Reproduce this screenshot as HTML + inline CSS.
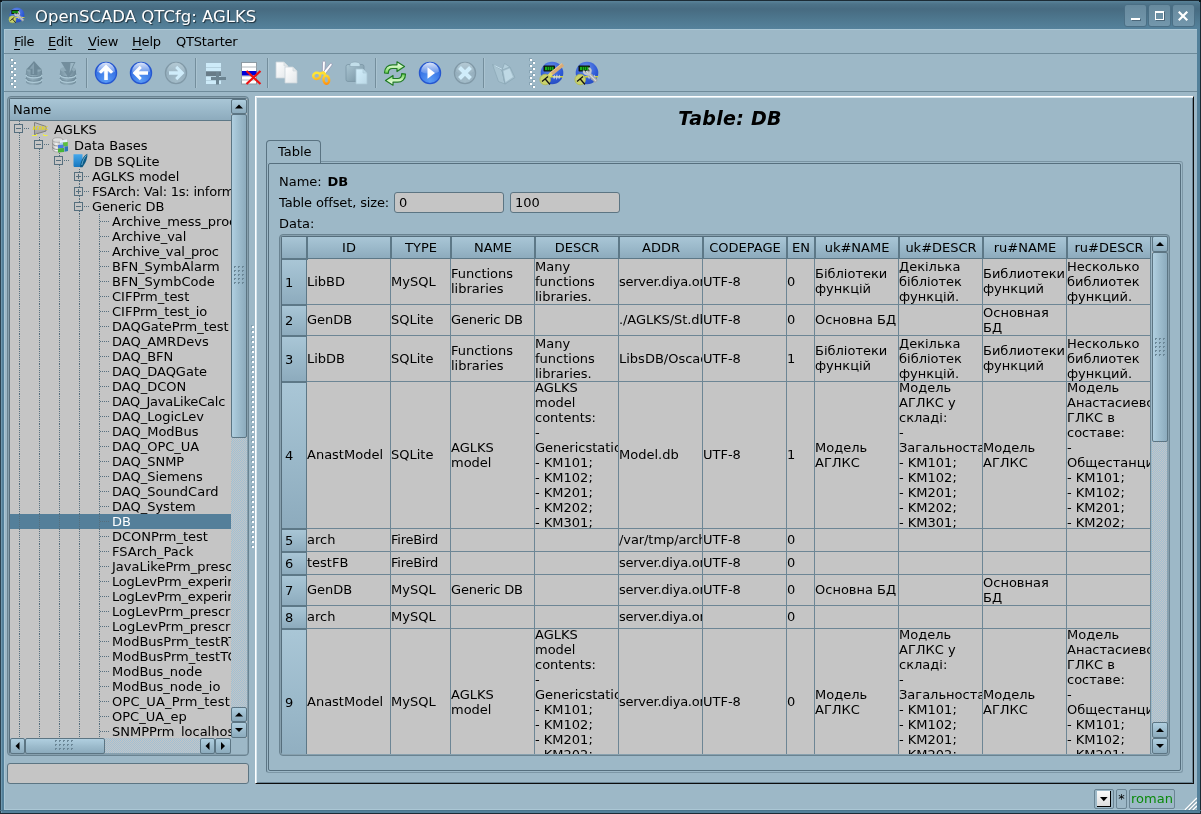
<!DOCTYPE html>
<html lang="en"><head><meta charset="utf-8"><title>OpenSCADA QTCfg: AGLKS</title>
<style>
*{box-sizing:border-box;margin:0;padding:0}
html,body{width:1201px;height:814px;overflow:hidden}
body{position:relative;background:#9db8c7;font-family:"DejaVu Sans","Liberation Sans",sans-serif;font-size:13px;color:#000;line-height:15px}
.a{position:absolute}
.nw{white-space:nowrap}
u{text-decoration:none;border-bottom:1px solid #000}
/* window frame */
#frame{left:0;top:0;width:1201px;height:814px;background:#53809a}
#client{left:4px;top:29px;width:1193px;height:781px;background:#9db8c7}
#title{left:0;top:0;width:1201px;height:29px;background:linear-gradient(#1c2b35 0,#1c2b35 1px,#5a8399 1px,#4d7389 4px,#476b81 9px,#4d768d 18px,#55829c 29px)}
#ttext{left:35px;top:6px;font-size:16.5px;line-height:22px;color:#fff;text-shadow:1px 1px 1px #1d2f3a}
.wb{top:4px;width:23px;height:23px;border:1px solid #4b6f85;border-radius:3px;background:linear-gradient(#678a9e,#7397ac)}
/* generic */
.grad{background:linear-gradient(#adcbdb,#9fbdce 45%,#8eadbf)}
.sunk{background:#c5c5c5}
.tree div.r{position:absolute;left:0;height:15px;white-space:nowrap}
.chk{background:repeating-conic-gradient(#c5c5c5 0% 25%,#9fc0d5 0% 50%) 0 0/2px 2px}
.sb{border:1px solid #5c7583;border-radius:2px;background:linear-gradient(90deg,#b0cfe0,#9dbccd 50%,#8cabbd)}
.sbh{border:1px solid #5c7583;border-radius:2px;background:linear-gradient(#b0cfe0,#9dbccd 50%,#8cabbd)}
.hd{position:absolute;border-right:2px solid #5d7887;border-bottom:2px solid #5d7887;background:linear-gradient(#a9c6d6,#9bb9ca 50%,#8dabbd);text-align:center;white-space:nowrap;overflow:hidden}
.vh{position:absolute;left:0;width:25px;border-right:1px solid #5d7887;border-bottom:2px solid #5d7887;background:linear-gradient(#a9c6d6,#9bb9ca 50%,#8dabbd);padding-left:3px;display:flex;align-items:center}
.cell{position:absolute;overflow:hidden;border-right:1px solid #6d8695;border-bottom:1px solid #6d8695}
.cell span{position:absolute;left:0;display:block;white-space:nowrap;line-height:15px}
</style></head><body>
<div id="root" class="a" style="left:0;top:0;width:1201px;height:814px;overflow:hidden;will-change:transform">

<div id="frame" class="a"></div>
<div id="title" class="a"></div>
<div class="a" style="left:0;top:0;width:1px;height:814px;background:#2c4351"></div>
<div class="a" style="left:1px;top:1px;width:1px;height:812px;background:#6f98af"></div>
<div class="a" style="left:1200px;top:0;width:1px;height:814px;background:#1c2b35"></div>
<div class="a" style="left:0;top:813px;width:1201px;height:1px;background:#1c2b35"></div>
<div id="client" class="a" style="border-left:1px solid #abc7d5;border-bottom:1px solid #abc7d5;border-top:1px solid #abc7d5"></div>
<div class="a" style="left:0;top:810px;width:1201px;height:1px;background:#4a748c"></div>
<div class="a" style="left:0;top:0;width:2px;height:2px;background:#0c1418"></div>
<div class="a" style="left:1199px;top:0;width:2px;height:2px;background:#0c1418"></div>
<div class="a" style="left:9px;top:7px;width:17px;height:17px"><svg width="16" height="16" viewBox="0 0 24 24" style="display:block;overflow:visible"><defs><radialGradient id="g21" cx=".45" cy=".3" r=".8"><stop offset="0" stop-color="#6f93ea"/><stop offset=".6" stop-color="#2f5bd6"/><stop offset="1" stop-color="#2448b8"/></radialGradient></defs><circle cx="12" cy="12" r="11.300" fill="url(#g21)"/><rect x="3.500" y="4.500" width="11.500" height="6" rx=".8" fill="#0c140c"/><rect x="5" y="5.800" width="8.500" height="3.400" fill="#18b018"/><path d="M7.500 5.800V9.200M9.500 5.800V9.200M11.500 5.800V9.200" stroke="#0c3c0c" stroke-width=".7"/><path d="M8 15.800H23" stroke="#e8e428" stroke-width="1.300"/><path d="M13 16l1.500-2.500 1 2.500 1.500-3 1 3 1.500-2.500 1 2.500-1.500 2.500-1-2.500-1.500 3-1-3-1.500 2.500z" fill="#d8dce8" opacity=".8"/><circle cx="5.200" cy="18.500" r="5.300" fill="#c9d26c"/><circle cx="5.200" cy="18.500" r="5.300" fill="none" stroke="#aeb850" stroke-width=".8"/><path d="M2 20.500L8 15.500M5 17.800L10 23.500" stroke="#141414" stroke-width="1.300"/><path d="M11.500 10.500L21.500 20.500" stroke="#a2a6aa" stroke-width="4"/><path d="M11 10L21 20" stroke="#d4d8dc" stroke-width="1.200"/><path d="M9 9.500A3.300 3.300 0 1 0 13.500 7" fill="none" stroke="#c4c8cc" stroke-width="2.200"/></svg></div>
<div id="ttext" class="a nw">OpenSCADA QTCfg: AGLKS</div>
<div class="a wb" style="left:1124px"><div class="a" style="left:6px;top:13px;width:9px;height:2px;background:#fff;box-shadow:1px 1px 0 rgba(40,60,75,.5)"></div></div><div class="a wb" style="left:1148px"><div class="a" style="left:6px;top:6px;width:9px;height:9px;border:1px solid #fff;border-top-width:2px;box-shadow:1px 1px 0 rgba(40,60,75,.5)"></div></div><div class="a wb" style="left:1172px"><svg class="a" style="left:5px;top:6px" width="11" height="11"><path d="M1.5 1.5L8.500 8.500M8.500 1.500L1.500 8.500" stroke="#fff" stroke-width="2.2" stroke-linecap="square"/></svg></div>
<div class="a" style="left:4px;top:53px;width:1193px;height:1px;background:#6f8b9a"></div>
<div class="a nw" style="left:14px;top:34px;line-height:16px;letter-spacing:-0.4px"><u>F</u>ile</div>
<div class="a nw" style="left:48px;top:34px;line-height:16px;letter-spacing:-0.2px"><u>E</u>dit</div>
<div class="a nw" style="left:88px;top:34px;line-height:16px;letter-spacing:-0.2px"><u>V</u>iew</div>
<div class="a nw" style="left:132px;top:34px;line-height:16px;letter-spacing:-0.2px"><u>H</u>elp</div>
<div class="a nw" style="left:176px;top:34px;line-height:16px;letter-spacing:-0.2px">QTStarter</div>
<div class="a" style="left:4px;top:91px;width:1193px;height:1px;background:#6f8b9a"></div>
<svg class="a" style="left:10px;top:58px" width="6" height="30" shape-rendering="crispEdges"><rect x="0" y="0" width="3" height="3" fill="#86a3b3"/><rect x="1" y="1" width="2" height="2" fill="#fff"/><rect x="3" y="3" width="3" height="3" fill="#86a3b3"/><rect x="4" y="4" width="2" height="2" fill="#fff"/><rect x="0" y="6" width="3" height="3" fill="#86a3b3"/><rect x="1" y="7" width="2" height="2" fill="#fff"/><rect x="3" y="9" width="3" height="3" fill="#86a3b3"/><rect x="4" y="10" width="2" height="2" fill="#fff"/><rect x="0" y="12" width="3" height="3" fill="#86a3b3"/><rect x="1" y="13" width="2" height="2" fill="#fff"/><rect x="3" y="15" width="3" height="3" fill="#86a3b3"/><rect x="4" y="16" width="2" height="2" fill="#fff"/><rect x="0" y="18" width="3" height="3" fill="#86a3b3"/><rect x="1" y="19" width="2" height="2" fill="#fff"/><rect x="3" y="21" width="3" height="3" fill="#86a3b3"/><rect x="4" y="22" width="2" height="2" fill="#fff"/><rect x="0" y="24" width="3" height="3" fill="#86a3b3"/><rect x="1" y="25" width="2" height="2" fill="#fff"/><rect x="3" y="27" width="3" height="3" fill="#86a3b3"/><rect x="4" y="28" width="2" height="2" fill="#fff"/></svg><svg class="a" style="left:529px;top:58px" width="6" height="30" shape-rendering="crispEdges"><rect x="0" y="0" width="3" height="3" fill="#86a3b3"/><rect x="1" y="1" width="2" height="2" fill="#fff"/><rect x="3" y="3" width="3" height="3" fill="#86a3b3"/><rect x="4" y="4" width="2" height="2" fill="#fff"/><rect x="0" y="6" width="3" height="3" fill="#86a3b3"/><rect x="1" y="7" width="2" height="2" fill="#fff"/><rect x="3" y="9" width="3" height="3" fill="#86a3b3"/><rect x="4" y="10" width="2" height="2" fill="#fff"/><rect x="0" y="12" width="3" height="3" fill="#86a3b3"/><rect x="1" y="13" width="2" height="2" fill="#fff"/><rect x="3" y="15" width="3" height="3" fill="#86a3b3"/><rect x="4" y="16" width="2" height="2" fill="#fff"/><rect x="0" y="18" width="3" height="3" fill="#86a3b3"/><rect x="1" y="19" width="2" height="2" fill="#fff"/><rect x="3" y="21" width="3" height="3" fill="#86a3b3"/><rect x="4" y="22" width="2" height="2" fill="#fff"/><rect x="0" y="24" width="3" height="3" fill="#86a3b3"/><rect x="1" y="25" width="2" height="2" fill="#fff"/><rect x="3" y="27" width="3" height="3" fill="#86a3b3"/><rect x="4" y="28" width="2" height="2" fill="#fff"/></svg><div class="a" style="left:86px;top:58px;width:2px;height:30px;background:linear-gradient(90deg,#748e9c 50%,#aac3d0 50%)"></div><div class="a" style="left:195px;top:58px;width:2px;height:30px;background:linear-gradient(90deg,#748e9c 50%,#aac3d0 50%)"></div><div class="a" style="left:267px;top:58px;width:2px;height:30px;background:linear-gradient(90deg,#748e9c 50%,#aac3d0 50%)"></div><div class="a" style="left:375px;top:58px;width:2px;height:30px;background:linear-gradient(90deg,#748e9c 50%,#aac3d0 50%)"></div><div class="a" style="left:483px;top:58px;width:2px;height:30px;background:linear-gradient(90deg,#748e9c 50%,#aac3d0 50%)"></div><div class="a" style="left:22px;top:61px;width:24px;height:24px"><svg width="24" height="24" viewBox="0 0 24 24" style="display:block;overflow:visible"><defs><linearGradient id="g11" x1="0" y1="0" x2="1" y2="0"><stop offset="0" stop-color="#7893a2"/><stop offset=".4" stop-color="#91acba"/><stop offset="1" stop-color="#6f8a99"/></linearGradient></defs><path d="M4 8.500V20.800C4 22.600 7.500 24 12 24S20 22.600 20 20.800V8.500Z" fill="url(#g11)"/><ellipse cx="12" cy="8.500" rx="8" ry="2.800" fill="#8faab8"/><path d="M4 12.800C4 14.600 7.500 15.800 12 15.800S20 14.600 20 12.800" fill="none" stroke="#6f8a99" stroke-width="1"/><path d="M4 17.300C4 19.100 7.500 20.300 12 20.300S20 19.100 20 17.300" fill="none" stroke="#6f8a99" stroke-width="1"/><path d="M4 13.800C4 15.600 7.500 16.800 12 16.800S20 15.600 20 13.800" fill="none" stroke="#aecad7" stroke-width="1.300"/><path d="M4 18.300C4 20.100 7.500 21.300 12 21.300S20 20.100 20 18.300" fill="none" stroke="#aecad7" stroke-width="1.300"/><path d="M12 0L4.500 8.500H8.500V14H15.500V8.500H19.500Z" fill="#6e8998"/><path d="M12 2L7.500 7.800H10.500V13H12Z" fill="#86a1b0"/></svg></div><div class="a" style="left:56px;top:61px;width:24px;height:24px"><svg width="24" height="24" viewBox="0 0 24 24" style="display:block;overflow:visible"><defs><linearGradient id="g12" x1="0" y1="0" x2="1" y2="0"><stop offset="0" stop-color="#7893a2"/><stop offset=".4" stop-color="#91acba"/><stop offset="1" stop-color="#6f8a99"/></linearGradient></defs><path d="M4 8.500V20.800C4 22.600 7.500 24 12 24S20 22.600 20 20.800V8.500Z" fill="url(#g12)"/><ellipse cx="12" cy="8.500" rx="8" ry="2.800" fill="#8faab8"/><path d="M4 12.800C4 14.600 7.500 15.800 12 15.800S20 14.600 20 12.800" fill="none" stroke="#6f8a99" stroke-width="1"/><path d="M4 17.300C4 19.100 7.500 20.300 12 20.300S20 19.100 20 17.300" fill="none" stroke="#6f8a99" stroke-width="1"/><path d="M4 13.800C4 15.600 7.500 16.800 12 16.800S20 15.600 20 13.800" fill="none" stroke="#aecad7" stroke-width="1.300"/><path d="M4 18.300C4 20.100 7.500 21.300 12 21.300S20 20.100 20 18.300" fill="none" stroke="#aecad7" stroke-width="1.300"/><path d="M5 1H19.500L15.500 9L17.500 10L12.500 16.500L8 10H10.500Z" fill="#738e9d"/><path d="M14.500 2H18L13.500 12Z" fill="#9cb7c5"/></svg></div><div class="a" style="left:94px;top:61px;width:24px;height:24px"><svg width="24" height="24" viewBox="0 0 24 24" style="display:block;overflow:visible"><defs><radialGradient id="g1" cx=".5" cy=".85" r=".8"><stop offset="0" stop-color="#5a9cf6"/><stop offset="1" stop-color="#2a63dd"/></radialGradient><linearGradient id="g2" x1="0" y1="0" x2="0" y2="1"><stop offset="0" stop-color="#ffffff" stop-opacity="0.85"/><stop offset="1" stop-color="#ffffff" stop-opacity="0.15"/></linearGradient></defs><circle cx="12" cy="12" r="10.6" fill="url(#g1)" stroke="#2556cf" stroke-width="1.2"/><path d="M3 10.500A9 9 0 0 1 21 10.500C18 13.500 6 13.500 3 10.500Z" fill="url(#g2)"/><path d="M12 3.500L4.800 10.800L7 12.800L10.200 9.800V19H13.800V9.800L17 12.800L19.200 10.800Z" fill="#fff"/></svg></div><div class="a" style="left:129px;top:61px;width:24px;height:24px"><svg width="24" height="24" viewBox="0 0 24 24" style="display:block;overflow:visible"><defs><radialGradient id="g3" cx=".5" cy=".85" r=".8"><stop offset="0" stop-color="#5a9cf6"/><stop offset="1" stop-color="#2a63dd"/></radialGradient><linearGradient id="g4" x1="0" y1="0" x2="0" y2="1"><stop offset="0" stop-color="#ffffff" stop-opacity="0.85"/><stop offset="1" stop-color="#ffffff" stop-opacity="0.15"/></linearGradient></defs><circle cx="12" cy="12" r="10.6" fill="url(#g3)" stroke="#2556cf" stroke-width="1.2"/><path d="M3 10.500A9 9 0 0 1 21 10.500C18 13.500 6 13.500 3 10.500Z" fill="url(#g4)"/><path d="M12 3.500L4.800 10.800L7 12.800L10.200 9.800V19H13.800V9.800L17 12.800L19.200 10.800Z" fill="#fff" transform="rotate(-90 12 12)"/></svg></div><div class="a" style="left:164px;top:61px;width:24px;height:24px"><svg width="24" height="24" viewBox="0 0 24 24" style="display:block;overflow:visible"><defs><radialGradient id="g5" cx=".5" cy=".85" r=".8"><stop offset="0" stop-color="#a3bcc9"/><stop offset="1" stop-color="#90aab9"/></radialGradient><linearGradient id="g6" x1="0" y1="0" x2="0" y2="1"><stop offset="0" stop-color="#d4e6ee" stop-opacity="0.55"/><stop offset="1" stop-color="#d4e6ee" stop-opacity="0.05"/></linearGradient></defs><circle cx="12" cy="12" r="10.6" fill="url(#g5)" stroke="#8199a7" stroke-width="1.2"/><path d="M3 10.500A9 9 0 0 1 21 10.500C18 13.500 6 13.500 3 10.500Z" fill="url(#g6)"/><path d="M12 3.500L4.800 10.800L7 12.800L10.200 9.800V19H13.800V9.800L17 12.800L19.200 10.800Z" fill="#cfecfa" transform="rotate(90 12 12)"/></svg></div><div class="a" style="left:202px;top:61px;width:24px;height:24px"><svg width="24" height="24" viewBox="0 0 24 24" style="display:block;overflow:visible"><rect x="4" y="2" width="15" height="4" fill="#cdebf9"/><rect x="4" y="6.500" width="15" height="3.500" fill="#cdebf9"/><rect x="4" y="10.500" width="15" height="4.500" fill="#687c88"/><rect x="4" y="15.500" width="15" height="3.500" fill="#cdebf9"/><rect x="4" y="19.500" width="15" height="3.500" fill="#cdebf9"/><path d="M15.500 11V23.500M9 17.500H24" stroke="#6c8491" stroke-width="3"/></svg></div><div class="a" style="left:238px;top:61px;width:24px;height:24px"><svg width="24" height="24" viewBox="0 0 24 24" style="display:block;overflow:visible"><rect x="3.500" y="1.500" width="15" height="21.500" fill="#fff" stroke="#8c9aa3" stroke-width="1"/><path d="M3.500 6H18.500M3.500 15H18.500M3.500 19H18.500" stroke="#b0b8bd" stroke-width="1"/><rect x="4" y="10" width="14.500" height="4.500" fill="#0000d6"/><path d="M8.500 10L22.500 23M22.500 10L8.500 23" stroke="#ee1010" stroke-width="2.200"/></svg></div><div class="a" style="left:275px;top:61px;width:24px;height:24px"><svg width="24" height="24" viewBox="0 0 24 24" style="display:block;overflow:visible"><defs><linearGradient id="g13" x1="0" y1="0" x2="1" y2="1"><stop offset="0" stop-color="#ffffff"/><stop offset="1" stop-color="#e3e7ea"/></linearGradient></defs><path d="M1 1H9L13 5V17H1Z" fill="url(#g13)" stroke="#c9d3d9" stroke-width=".8"/><path d="M9 1V5H13Z" fill="#e3e7ea" stroke="#c9d3d9" stroke-width=".6"/><defs><linearGradient id="g14" x1="0" y1="0" x2="1" y2="1"><stop offset="0" stop-color="#ffffff"/><stop offset="1" stop-color="#e3e7ea"/></linearGradient></defs><path d="M10 6H18L22 10V22H10Z" fill="url(#g14)" stroke="#c9d3d9" stroke-width=".8"/><path d="M18 6V10H22Z" fill="#e3e7ea" stroke="#c9d3d9" stroke-width=".6"/></svg></div><div class="a" style="left:310px;top:61px;width:24px;height:24px"><svg width="24" height="24" viewBox="0 0 24 24" style="display:block;overflow:visible"><defs><linearGradient id="cutg" x1="0" y1="11" x2="0" y2="23.500" gradientUnits="userSpaceOnUse"><stop offset=".15" stop-color="#ffe636"/><stop offset="1" stop-color="#ff9010"/></linearGradient></defs><path d="M14 0C15 0 15.500 .8 15.400 2L14.700 11.500L12.300 12.500L12.500 2C12.500 .8 13 0 14 0Z" fill="#fbfbfd" stroke="#8e8eaa" stroke-width=".7"/><path d="M21.700 2.600C22.300 3.200 22.100 4 21.500 4.800L15.200 13.200L13 11.300L19.800 3C20.400 2.200 21.100 2 21.700 2.600Z" fill="#fbfbfd" stroke="#8e8eaa" stroke-width=".7"/><path d="M10 12.500L13.600 11.600L15.300 13.800" stroke="#ffe032" stroke-width="2.800" fill="none" stroke-linejoin="round"/><ellipse cx="6.700" cy="14.800" rx="3.500" ry="3.100" transform="rotate(-12 6.700 14.800)" fill="none" stroke="url(#cutg)" stroke-width="2.500"/><ellipse cx="16.300" cy="18.700" rx="2.800" ry="4" transform="rotate(-8 16.300 18.700)" fill="none" stroke="url(#cutg)" stroke-width="2.500"/></svg></div><div class="a" style="left:345px;top:61px;width:24px;height:24px"><svg width="24" height="24" viewBox="0 0 24 24" style="display:block;overflow:visible"><defs><linearGradient id="g15" x1="0" y1="0" x2="1" y2="1"><stop offset="0" stop-color="#aac6d3"/><stop offset="1" stop-color="#7590a0"/></linearGradient></defs><rect x="1" y="3.500" width="18" height="17" rx="2" fill="url(#g15)" stroke="#7a95a5" stroke-width=".8"/><path d="M5 5.500V3.500C5 2 7 1 10 1S15 2 15 3.500V5.500Z" fill="#c2deea" stroke="#8aa5b4" stroke-width=".6"/><defs><linearGradient id="g16" x1="0" y1="0" x2="1" y2="1"><stop offset="0" stop-color="#d3effc"/><stop offset="1" stop-color="#bcd9e7"/></linearGradient></defs><path d="M11 8H18L22 12V23H11Z" fill="url(#g16)" stroke="#a9c6d4" stroke-width=".8"/><path d="M18 8V12H22Z" fill="#bcd9e7" stroke="#a9c6d4" stroke-width=".6"/></svg></div><div class="a" style="left:383px;top:61px;width:24px;height:24px"><svg width="24" height="24" viewBox="0 0 24 24" style="display:block;overflow:visible"><defs><linearGradient id="g17" x1="0" y1="0" x2="0" y2="1"><stop offset="0" stop-color="#ffffff"/><stop offset=".5" stop-color="#c2f2b0"/><stop offset="1" stop-color="#62cc48"/></linearGradient></defs><path d="M1.500 12C1.500 6.500 5 3.800 9.500 3.800H14V.8L21.500 5.500L14 10.500V7.500H9.500C7 7.500 5.300 9 5.300 12.300Z" fill="url(#g17)" stroke="#1f7a24" stroke-width="1.200" stroke-linejoin="round"/><defs><linearGradient id="g18" x1="0" y1="0" x2="0" y2="1"><stop offset="0" stop-color="#ffffff"/><stop offset=".5" stop-color="#c2f2b0"/><stop offset="1" stop-color="#62cc48"/></linearGradient></defs><path transform="rotate(180 12 12.500)" d="M1.500 12C1.500 6.500 5 3.800 9.500 3.800H14V.8L21.500 5.500L14 10.500V7.500H9.500C7 7.500 5.300 9 5.300 12.300Z" fill="url(#g18)" stroke="#1f7a24" stroke-width="1.200" stroke-linejoin="round"/></svg></div><div class="a" style="left:418px;top:61px;width:24px;height:24px"><svg width="24" height="24" viewBox="0 0 24 24" style="display:block;overflow:visible"><defs><radialGradient id="g7" cx=".5" cy=".85" r=".8"><stop offset="0" stop-color="#5a9cf6"/><stop offset="1" stop-color="#2a63dd"/></radialGradient><linearGradient id="g8" x1="0" y1="0" x2="0" y2="1"><stop offset="0" stop-color="#ffffff" stop-opacity="0.85"/><stop offset="1" stop-color="#ffffff" stop-opacity="0.15"/></linearGradient></defs><circle cx="12" cy="12" r="10.6" fill="url(#g7)" stroke="#2556cf" stroke-width="1.2"/><path d="M3 10.500A9 9 0 0 1 21 10.500C18 13.500 6 13.500 3 10.500Z" fill="url(#g8)"/><path d="M9.500 6.200L17 12L9.500 17.800Z" fill="#fff"/></svg></div><div class="a" style="left:453px;top:61px;width:24px;height:24px"><svg width="24" height="24" viewBox="0 0 24 24" style="display:block;overflow:visible"><defs><radialGradient id="g9" cx=".5" cy=".85" r=".8"><stop offset="0" stop-color="#a3bcc9"/><stop offset="1" stop-color="#90aab9"/></radialGradient><linearGradient id="g10" x1="0" y1="0" x2="0" y2="1"><stop offset="0" stop-color="#d4e6ee" stop-opacity="0.55"/><stop offset="1" stop-color="#d4e6ee" stop-opacity="0.05"/></linearGradient></defs><circle cx="12" cy="12" r="10.6" fill="url(#g9)" stroke="#8199a7" stroke-width="1.2"/><path d="M3 10.500A9 9 0 0 1 21 10.500C18 13.500 6 13.500 3 10.500Z" fill="url(#g10)"/><path d="M6.500 6.500L17.500 17.500M17.500 6.500L6.500 17.500" stroke="#cfecfa" stroke-width="4"/></svg></div><div class="a" style="left:491px;top:61px;width:24px;height:24px"><svg width="24" height="24" viewBox="0 0 24 24" style="display:block;overflow:visible"><path d="M1.500 3.500L11 9L14 23L7.500 20.500Z" fill="#a9c4d1" stroke="#8aa6b5" stroke-width=".7"/><path d="M3.500 4.500L11.500 8.500L14 22" fill="none" stroke="#c2dce8" stroke-width="1"/><path d="M11 9L13.500 2.500L19 6L22.500 17L14 23Z" fill="#b4cfdc" stroke="#8aa6b5" stroke-width=".7"/><path d="M11 9L19 6L24 16.500L14 23Z" fill="#a3becc" stroke="#8aa6b5" stroke-width=".7"/><path d="M12.500 10L18.500 7.500L22 16L14.500 21Z" fill="#bfd9e5"/></svg></div><div class="a" style="left:540px;top:61px;width:24px;height:24px"><svg width="24" height="24" viewBox="0 0 24 24" style="display:block;overflow:visible"><defs><radialGradient id="g19" cx=".45" cy=".3" r=".8"><stop offset="0" stop-color="#6f93ea"/><stop offset=".6" stop-color="#2f5bd6"/><stop offset="1" stop-color="#2448b8"/></radialGradient></defs><circle cx="12" cy="12" r="11.300" fill="url(#g19)"/><rect x="3.500" y="4.500" width="11.500" height="6" rx=".8" fill="#0c140c"/><rect x="5" y="5.800" width="8.500" height="3.400" fill="#18b018"/><path d="M7.500 5.800V9.200M9.500 5.800V9.200M11.500 5.800V9.200" stroke="#0c3c0c" stroke-width=".7"/><path d="M8 15.800H23" stroke="#e8e428" stroke-width="1.300"/><path d="M13 16l1.500-2.500 1 2.500 1.500-3 1 3 1.500-2.500 1 2.500-1.500 2.500-1-2.500-1.500 3-1-3-1.500 2.500z" fill="#d8dce8" opacity=".8"/><circle cx="5.200" cy="18.500" r="5.300" fill="#c9d26c"/><circle cx="5.200" cy="18.500" r="5.300" fill="none" stroke="#aeb850" stroke-width=".8"/><path d="M2 20.500L8 15.500M5 17.800L10 23.500" stroke="#141414" stroke-width="1.300"/><path d="M23 3.500L10.500 13.500" stroke="#d9ab77" stroke-width="3.600"/><path d="M22 2.500L10 12" stroke="#e9c79c" stroke-width="1"/><path d="M11.500 12.500L9 15" stroke="#e6dc6a" stroke-width="3.600"/></svg></div><div class="a" style="left:575px;top:61px;width:24px;height:24px"><svg width="24" height="24" viewBox="0 0 24 24" style="display:block;overflow:visible"><defs><radialGradient id="g20" cx=".45" cy=".3" r=".8"><stop offset="0" stop-color="#6f93ea"/><stop offset=".6" stop-color="#2f5bd6"/><stop offset="1" stop-color="#2448b8"/></radialGradient></defs><circle cx="12" cy="12" r="11.300" fill="url(#g20)"/><rect x="3.500" y="4.500" width="11.500" height="6" rx=".8" fill="#0c140c"/><rect x="5" y="5.800" width="8.500" height="3.400" fill="#18b018"/><path d="M7.500 5.800V9.200M9.500 5.800V9.200M11.500 5.800V9.200" stroke="#0c3c0c" stroke-width=".7"/><path d="M8 15.800H23" stroke="#e8e428" stroke-width="1.300"/><path d="M13 16l1.500-2.500 1 2.500 1.500-3 1 3 1.500-2.500 1 2.500-1.500 2.500-1-2.500-1.500 3-1-3-1.500 2.500z" fill="#d8dce8" opacity=".8"/><circle cx="5.200" cy="18.500" r="5.300" fill="#c9d26c"/><circle cx="5.200" cy="18.500" r="5.300" fill="none" stroke="#aeb850" stroke-width=".8"/><path d="M2 20.500L8 15.500M5 17.800L10 23.500" stroke="#141414" stroke-width="1.300"/><path d="M11.500 10.500L21.500 20.500" stroke="#a2a6aa" stroke-width="4"/><path d="M11 10L21 20" stroke="#d4d8dc" stroke-width="1.200"/><path d="M9 9.500A3.300 3.300 0 1 0 13.500 7" fill="none" stroke="#c4c8cc" stroke-width="2.200"/></svg></div>
<div class="a" style="left:7px;top:96px;width:242px;height:660px;border:1px solid #6a8391;border-radius:4px;background:#87a0ae"></div><div class="a" style="left:9px;top:98px;width:238px;height:656px;border:1px solid #566e7c;border-right-color:#87a0ae;border-bottom-color:#87a0ae;border-radius:2px;background:#9db8c7"></div><div class="a" style="left:10px;top:99px;width:221px;height:22px;background:linear-gradient(#a9c6d6,#9bb9ca 50%,#8dabbd);border-bottom:1px solid #5d7887;padding-left:3px;line-height:21px">Name</div><div class="a sunk tree" style="left:10px;top:121px;width:221px;height:617px;overflow:hidden"><div class="a" style="left:22px;top:0px;width:16px;height:16px"><svg width="16" height="16" viewBox="0 0 16 16" style="display:block;overflow:visible"><defs><linearGradient id="tga" x1="0" y1="0" x2="0" y2="1"><stop offset="0" stop-color="#c4c4c4"/><stop offset="1" stop-color="#a2a2a2"/></linearGradient></defs><path d="M2.500 1.500L14 5.500V10L2.500 13.500Z" fill="url(#tga)" stroke="#7e7e7e" stroke-width="1"/><text x="0.500" y="9.300" font-family="DejaVu Sans,Liberation Sans,sans-serif" font-size="5.200" font-weight="bold" fill="#e6d820" textLength="15.500" lengthAdjust="spacingAndGlyphs">АГЛКС</text><path d="M0 14.500H4.500V13M11.500 13V14.500H15.500" stroke="#eeee44" stroke-width="1" fill="none"/></svg></div><div class="r" style="left:44px;top:1px;line-height:16px;height:16px;">AGLKS</div><div class="a" style="left:42px;top:16px;width:16px;height:16px"><svg width="16" height="16" viewBox="0 0 16 16" style="display:block;overflow:visible"><defs><linearGradient id="tgb" x1="0" y1="0" x2="1" y2="0"><stop offset="0" stop-color="#b8b8b8"/><stop offset=".35" stop-color="#f2f2f2"/><stop offset="1" stop-color="#9c9c9c"/></linearGradient></defs><path d="M.5 3V12.500C.5 13.800 2.800 15 5.800 15S11 13.800 11 12.500V3Z" fill="url(#tgb)" stroke="#8e8e8e" stroke-width=".6"/><ellipse cx="5.800" cy="3" rx="5.200" ry="2.300" fill="#dcdcdc" stroke="#8e8e8e" stroke-width=".6"/><path d="M.5 6.500C.5 7.800 2.800 9 5.800 9M.5 10C.5 11.300 2.800 12.500 5.800 12.500" fill="none" stroke="#7c7c7c" stroke-width=".8"/><path d="M8 3.500L15 2.500V5L8 6Z" fill="#e8f2fa"/><path d="M11 5.500L15.800 5V9L11 9.500Z" fill="#5cc040"/><path d="M6 8L11.500 7.500V11L6 11.500Z" fill="#4a7ce0"/><path d="M6 11.500L12 11V15L6 15.500Z" fill="#48b438"/><path d="M12.500 9.500L16 9.200V14L12.500 14.800Z" fill="#2c78b8"/><path d="M8 6L11 5.700V7.500L8 7.800Z" fill="#a8d4f4"/></svg></div><div class="r" style="left:64px;top:17px;line-height:16px;height:16px;">Data Bases</div><div class="a" style="left:62px;top:32px;width:16px;height:16px"><svg width="16" height="16" viewBox="0 0 16 16" style="display:block;overflow:visible"><defs><linearGradient id="tgc" x1="0" y1="0" x2="0" y2="1"><stop offset="0" stop-color="#44a8ec"/><stop offset="1" stop-color="#1676be"/></linearGradient></defs><path d="M1.500 1.300H10.500V14H3C2 14 1.500 13.500 1.500 12.500Z" fill="url(#tgc)"/><path d="M8 14.200C8.500 8.500 11 3 15.300 .8C15.800 5 13.500 10.500 10.300 14.200Z" fill="#0d5a84"/><path d="M9.800 12C10.500 8 12.300 4.500 14.300 2.500" stroke="#7cc0e4" stroke-width=".8" fill="none"/></svg></div><div class="r" style="left:84px;top:33px;line-height:16px;height:16px;">DB SQLite</div><div class="r" style="left:82px;top:48px;line-height:15px;height:15px;">AGLKS model</div><div class="r" style="left:82px;top:63px;line-height:15px;height:15px;letter-spacing:-0.22px;">FSArch: Val: 1s: information</div><div class="r" style="left:82px;top:78px;line-height:15px;height:15px;letter-spacing:-0.13px;">Generic DB</div><div class="r" style="left:102px;top:93px;line-height:15px;height:15px;">Archive_mess_proc</div><div class="r" style="left:102px;top:108px;line-height:15px;height:15px;">Archive_val</div><div class="r" style="left:102px;top:123px;line-height:15px;height:15px;letter-spacing:-0.16px;">Archive_val_proc</div><div class="r" style="left:102px;top:138px;line-height:15px;height:15px;">BFN_SymbAlarm</div><div class="r" style="left:102px;top:153px;line-height:15px;height:15px;">BFN_SymbCode</div><div class="r" style="left:102px;top:168px;line-height:15px;height:15px;">CIFPrm_test</div><div class="r" style="left:102px;top:183px;line-height:15px;height:15px;">CIFPrm_test_io</div><div class="r" style="left:102px;top:198px;line-height:15px;height:15px;">DAQGatePrm_test</div><div class="r" style="left:102px;top:213px;line-height:15px;height:15px;">DAQ_AMRDevs</div><div class="r" style="left:102px;top:228px;line-height:15px;height:15px;">DAQ_BFN</div><div class="r" style="left:102px;top:243px;line-height:15px;height:15px;">DAQ_DAQGate</div><div class="r" style="left:102px;top:258px;line-height:15px;height:15px;">DAQ_DCON</div><div class="r" style="left:102px;top:273px;line-height:15px;height:15px;letter-spacing:-0.2px;">DAQ_JavaLikeCalc</div><div class="r" style="left:102px;top:288px;line-height:15px;height:15px;">DAQ_LogicLev</div><div class="r" style="left:102px;top:303px;line-height:15px;height:15px;">DAQ_ModBus</div><div class="r" style="left:102px;top:318px;line-height:15px;height:15px;">DAQ_OPC_UA</div><div class="r" style="left:102px;top:333px;line-height:15px;height:15px;">DAQ_SNMP</div><div class="r" style="left:102px;top:348px;line-height:15px;height:15px;">DAQ_Siemens</div><div class="r" style="left:102px;top:363px;line-height:15px;height:15px;">DAQ_SoundCard</div><div class="r" style="left:102px;top:378px;line-height:15px;height:15px;">DAQ_System</div><div class="a" style="left:0;top:393px;width:221px;height:15px;background:#547f9a"></div><div class="r" style="left:102px;top:393px;line-height:15px;height:15px;color:#fff;">DB</div><div class="r" style="left:102px;top:408px;line-height:15px;height:15px;">DCONPrm_test</div><div class="r" style="left:102px;top:423px;line-height:15px;height:15px;">FSArch_Pack</div><div class="r" style="left:102px;top:438px;line-height:15px;height:15px;">JavaLikePrm_prescription</div><div class="r" style="left:102px;top:453px;line-height:15px;height:15px;letter-spacing:-0.2px;">LogLevPrm_experiment</div><div class="r" style="left:102px;top:468px;line-height:15px;height:15px;letter-spacing:-0.2px;">LogLevPrm_experiment_io</div><div class="r" style="left:102px;top:483px;line-height:15px;height:15px;">LogLevPrm_prescription</div><div class="r" style="left:102px;top:498px;line-height:15px;height:15px;">LogLevPrm_prescription_io</div><div class="r" style="left:102px;top:513px;line-height:15px;height:15px;">ModBusPrm_testRTU</div><div class="r" style="left:102px;top:528px;line-height:15px;height:15px;">ModBusPrm_testTCP</div><div class="r" style="left:102px;top:543px;line-height:15px;height:15px;">ModBus_node</div><div class="r" style="left:102px;top:558px;line-height:15px;height:15px;">ModBus_node_io</div><div class="r" style="left:102px;top:573px;line-height:15px;height:15px;letter-spacing:0.17px;">OPC_UA_Prm_test</div><div class="r" style="left:102px;top:588px;line-height:15px;height:15px;">OPC_UA_ep</div><div class="r" style="left:102px;top:603px;line-height:15px;height:15px;">SNMPPrm_localhost</div><svg class="a" style="left:0;top:0" width="221" height="617" shape-rendering="crispEdges"><line x1="9.5" y1="0" x2="9.5" y2="3" stroke="#566f7e" stroke-width="1" stroke-dasharray="1 1"/><line x1="9.5" y1="12" x2="9.5" y2="16" stroke="#566f7e" stroke-width="1" stroke-dasharray="1 1"/><rect x="4.5" y="3.5" width="8" height="8" fill="none" stroke="#566f7e"/><line x1="6" y1="7.5" x2="11" y2="7.5" stroke="#566f7e"/><line x1="14" y1="7.5" x2="19" y2="7.5" stroke="#566f7e" stroke-width="1" stroke-dasharray="1 1"/><line x1="9.5" y1="16" x2="9.5" y2="32" stroke="#566f7e" stroke-width="1" stroke-dasharray="1 1"/><line x1="29.5" y1="16" x2="29.5" y2="19" stroke="#566f7e" stroke-width="1" stroke-dasharray="1 1"/><line x1="29.5" y1="28" x2="29.5" y2="32" stroke="#566f7e" stroke-width="1" stroke-dasharray="1 1"/><rect x="24.5" y="19.5" width="8" height="8" fill="none" stroke="#566f7e"/><line x1="26" y1="23.5" x2="31" y2="23.5" stroke="#566f7e"/><line x1="34" y1="23.5" x2="39" y2="23.5" stroke="#566f7e" stroke-width="1" stroke-dasharray="1 1"/><line x1="9.5" y1="32" x2="9.5" y2="48" stroke="#566f7e" stroke-width="1" stroke-dasharray="1 1"/><line x1="29.5" y1="32" x2="29.5" y2="48" stroke="#566f7e" stroke-width="1" stroke-dasharray="1 1"/><line x1="49.5" y1="32" x2="49.5" y2="35" stroke="#566f7e" stroke-width="1" stroke-dasharray="1 1"/><line x1="49.5" y1="44" x2="49.5" y2="48" stroke="#566f7e" stroke-width="1" stroke-dasharray="1 1"/><rect x="44.5" y="35.5" width="8" height="8" fill="none" stroke="#566f7e"/><line x1="46" y1="39.5" x2="51" y2="39.5" stroke="#566f7e"/><line x1="54" y1="39.5" x2="59" y2="39.5" stroke="#566f7e" stroke-width="1" stroke-dasharray="1 1"/><line x1="9.5" y1="48" x2="9.5" y2="63" stroke="#566f7e" stroke-width="1" stroke-dasharray="1 1"/><line x1="29.5" y1="48" x2="29.5" y2="63" stroke="#566f7e" stroke-width="1" stroke-dasharray="1 1"/><line x1="49.5" y1="48" x2="49.5" y2="63" stroke="#566f7e" stroke-width="1" stroke-dasharray="1 1"/><line x1="69.5" y1="48" x2="69.5" y2="51" stroke="#566f7e" stroke-width="1" stroke-dasharray="1 1"/><line x1="69.5" y1="60" x2="69.5" y2="63" stroke="#566f7e" stroke-width="1" stroke-dasharray="1 1"/><rect x="64.5" y="51.5" width="8" height="8" fill="none" stroke="#566f7e"/><line x1="66" y1="55.5" x2="71" y2="55.5" stroke="#566f7e"/><line x1="68.5" y1="53" x2="68.5" y2="58" stroke="#566f7e"/><line x1="74" y1="55.5" x2="79" y2="55.5" stroke="#566f7e" stroke-width="1" stroke-dasharray="1 1"/><line x1="9.5" y1="63" x2="9.5" y2="78" stroke="#566f7e" stroke-width="1" stroke-dasharray="1 1"/><line x1="29.5" y1="63" x2="29.5" y2="78" stroke="#566f7e" stroke-width="1" stroke-dasharray="1 1"/><line x1="49.5" y1="63" x2="49.5" y2="78" stroke="#566f7e" stroke-width="1" stroke-dasharray="1 1"/><line x1="69.5" y1="63" x2="69.5" y2="66" stroke="#566f7e" stroke-width="1" stroke-dasharray="1 1"/><line x1="69.5" y1="75" x2="69.5" y2="78" stroke="#566f7e" stroke-width="1" stroke-dasharray="1 1"/><rect x="64.5" y="66.5" width="8" height="8" fill="none" stroke="#566f7e"/><line x1="66" y1="70.5" x2="71" y2="70.5" stroke="#566f7e"/><line x1="68.5" y1="68" x2="68.5" y2="73" stroke="#566f7e"/><line x1="74" y1="70.5" x2="79" y2="70.5" stroke="#566f7e" stroke-width="1" stroke-dasharray="1 1"/><line x1="9.5" y1="78" x2="9.5" y2="93" stroke="#566f7e" stroke-width="1" stroke-dasharray="1 1"/><line x1="29.5" y1="78" x2="29.5" y2="93" stroke="#566f7e" stroke-width="1" stroke-dasharray="1 1"/><line x1="49.5" y1="78" x2="49.5" y2="93" stroke="#566f7e" stroke-width="1" stroke-dasharray="1 1"/><line x1="69.5" y1="78" x2="69.5" y2="81" stroke="#566f7e" stroke-width="1" stroke-dasharray="1 1"/><line x1="69.5" y1="90" x2="69.5" y2="93" stroke="#566f7e" stroke-width="1" stroke-dasharray="1 1"/><rect x="64.5" y="81.5" width="8" height="8" fill="none" stroke="#566f7e"/><line x1="66" y1="85.5" x2="71" y2="85.5" stroke="#566f7e"/><line x1="74" y1="85.5" x2="79" y2="85.5" stroke="#566f7e" stroke-width="1" stroke-dasharray="1 1"/><line x1="9.5" y1="93" x2="9.5" y2="108" stroke="#566f7e" stroke-width="1" stroke-dasharray="1 1"/><line x1="29.5" y1="93" x2="29.5" y2="108" stroke="#566f7e" stroke-width="1" stroke-dasharray="1 1"/><line x1="49.5" y1="93" x2="49.5" y2="108" stroke="#566f7e" stroke-width="1" stroke-dasharray="1 1"/><line x1="69.5" y1="93" x2="69.5" y2="108" stroke="#566f7e" stroke-width="1" stroke-dasharray="1 1"/><line x1="89.5" y1="93" x2="89.5" y2="108" stroke="#566f7e" stroke-width="1" stroke-dasharray="1 1"/><line x1="90" y1="100.5" x2="99" y2="100.5" stroke="#566f7e" stroke-width="1" stroke-dasharray="1 1"/><line x1="9.5" y1="108" x2="9.5" y2="123" stroke="#566f7e" stroke-width="1" stroke-dasharray="1 1"/><line x1="29.5" y1="108" x2="29.5" y2="123" stroke="#566f7e" stroke-width="1" stroke-dasharray="1 1"/><line x1="49.5" y1="108" x2="49.5" y2="123" stroke="#566f7e" stroke-width="1" stroke-dasharray="1 1"/><line x1="69.5" y1="108" x2="69.5" y2="123" stroke="#566f7e" stroke-width="1" stroke-dasharray="1 1"/><line x1="89.5" y1="108" x2="89.5" y2="123" stroke="#566f7e" stroke-width="1" stroke-dasharray="1 1"/><line x1="90" y1="115.5" x2="99" y2="115.5" stroke="#566f7e" stroke-width="1" stroke-dasharray="1 1"/><line x1="9.5" y1="123" x2="9.5" y2="138" stroke="#566f7e" stroke-width="1" stroke-dasharray="1 1"/><line x1="29.5" y1="123" x2="29.5" y2="138" stroke="#566f7e" stroke-width="1" stroke-dasharray="1 1"/><line x1="49.5" y1="123" x2="49.5" y2="138" stroke="#566f7e" stroke-width="1" stroke-dasharray="1 1"/><line x1="69.5" y1="123" x2="69.5" y2="138" stroke="#566f7e" stroke-width="1" stroke-dasharray="1 1"/><line x1="89.5" y1="123" x2="89.5" y2="138" stroke="#566f7e" stroke-width="1" stroke-dasharray="1 1"/><line x1="90" y1="130.5" x2="99" y2="130.5" stroke="#566f7e" stroke-width="1" stroke-dasharray="1 1"/><line x1="9.5" y1="138" x2="9.5" y2="153" stroke="#566f7e" stroke-width="1" stroke-dasharray="1 1"/><line x1="29.5" y1="138" x2="29.5" y2="153" stroke="#566f7e" stroke-width="1" stroke-dasharray="1 1"/><line x1="49.5" y1="138" x2="49.5" y2="153" stroke="#566f7e" stroke-width="1" stroke-dasharray="1 1"/><line x1="69.5" y1="138" x2="69.5" y2="153" stroke="#566f7e" stroke-width="1" stroke-dasharray="1 1"/><line x1="89.5" y1="138" x2="89.5" y2="153" stroke="#566f7e" stroke-width="1" stroke-dasharray="1 1"/><line x1="90" y1="145.5" x2="99" y2="145.5" stroke="#566f7e" stroke-width="1" stroke-dasharray="1 1"/><line x1="9.5" y1="153" x2="9.5" y2="168" stroke="#566f7e" stroke-width="1" stroke-dasharray="1 1"/><line x1="29.5" y1="153" x2="29.5" y2="168" stroke="#566f7e" stroke-width="1" stroke-dasharray="1 1"/><line x1="49.5" y1="153" x2="49.5" y2="168" stroke="#566f7e" stroke-width="1" stroke-dasharray="1 1"/><line x1="69.5" y1="153" x2="69.5" y2="168" stroke="#566f7e" stroke-width="1" stroke-dasharray="1 1"/><line x1="89.5" y1="153" x2="89.5" y2="168" stroke="#566f7e" stroke-width="1" stroke-dasharray="1 1"/><line x1="90" y1="160.5" x2="99" y2="160.5" stroke="#566f7e" stroke-width="1" stroke-dasharray="1 1"/><line x1="9.5" y1="168" x2="9.5" y2="183" stroke="#566f7e" stroke-width="1" stroke-dasharray="1 1"/><line x1="29.5" y1="168" x2="29.5" y2="183" stroke="#566f7e" stroke-width="1" stroke-dasharray="1 1"/><line x1="49.5" y1="168" x2="49.5" y2="183" stroke="#566f7e" stroke-width="1" stroke-dasharray="1 1"/><line x1="69.5" y1="168" x2="69.5" y2="183" stroke="#566f7e" stroke-width="1" stroke-dasharray="1 1"/><line x1="89.5" y1="168" x2="89.5" y2="183" stroke="#566f7e" stroke-width="1" stroke-dasharray="1 1"/><line x1="90" y1="175.5" x2="99" y2="175.5" stroke="#566f7e" stroke-width="1" stroke-dasharray="1 1"/><line x1="9.5" y1="183" x2="9.5" y2="198" stroke="#566f7e" stroke-width="1" stroke-dasharray="1 1"/><line x1="29.5" y1="183" x2="29.5" y2="198" stroke="#566f7e" stroke-width="1" stroke-dasharray="1 1"/><line x1="49.5" y1="183" x2="49.5" y2="198" stroke="#566f7e" stroke-width="1" stroke-dasharray="1 1"/><line x1="69.5" y1="183" x2="69.5" y2="198" stroke="#566f7e" stroke-width="1" stroke-dasharray="1 1"/><line x1="89.5" y1="183" x2="89.5" y2="198" stroke="#566f7e" stroke-width="1" stroke-dasharray="1 1"/><line x1="90" y1="190.5" x2="99" y2="190.5" stroke="#566f7e" stroke-width="1" stroke-dasharray="1 1"/><line x1="9.5" y1="198" x2="9.5" y2="213" stroke="#566f7e" stroke-width="1" stroke-dasharray="1 1"/><line x1="29.5" y1="198" x2="29.5" y2="213" stroke="#566f7e" stroke-width="1" stroke-dasharray="1 1"/><line x1="49.5" y1="198" x2="49.5" y2="213" stroke="#566f7e" stroke-width="1" stroke-dasharray="1 1"/><line x1="69.5" y1="198" x2="69.5" y2="213" stroke="#566f7e" stroke-width="1" stroke-dasharray="1 1"/><line x1="89.5" y1="198" x2="89.5" y2="213" stroke="#566f7e" stroke-width="1" stroke-dasharray="1 1"/><line x1="90" y1="205.5" x2="99" y2="205.5" stroke="#566f7e" stroke-width="1" stroke-dasharray="1 1"/><line x1="9.5" y1="213" x2="9.5" y2="228" stroke="#566f7e" stroke-width="1" stroke-dasharray="1 1"/><line x1="29.5" y1="213" x2="29.5" y2="228" stroke="#566f7e" stroke-width="1" stroke-dasharray="1 1"/><line x1="49.5" y1="213" x2="49.5" y2="228" stroke="#566f7e" stroke-width="1" stroke-dasharray="1 1"/><line x1="69.5" y1="213" x2="69.5" y2="228" stroke="#566f7e" stroke-width="1" stroke-dasharray="1 1"/><line x1="89.5" y1="213" x2="89.5" y2="228" stroke="#566f7e" stroke-width="1" stroke-dasharray="1 1"/><line x1="90" y1="220.5" x2="99" y2="220.5" stroke="#566f7e" stroke-width="1" stroke-dasharray="1 1"/><line x1="9.5" y1="228" x2="9.5" y2="243" stroke="#566f7e" stroke-width="1" stroke-dasharray="1 1"/><line x1="29.5" y1="228" x2="29.5" y2="243" stroke="#566f7e" stroke-width="1" stroke-dasharray="1 1"/><line x1="49.5" y1="228" x2="49.5" y2="243" stroke="#566f7e" stroke-width="1" stroke-dasharray="1 1"/><line x1="69.5" y1="228" x2="69.5" y2="243" stroke="#566f7e" stroke-width="1" stroke-dasharray="1 1"/><line x1="89.5" y1="228" x2="89.5" y2="243" stroke="#566f7e" stroke-width="1" stroke-dasharray="1 1"/><line x1="90" y1="235.5" x2="99" y2="235.5" stroke="#566f7e" stroke-width="1" stroke-dasharray="1 1"/><line x1="9.5" y1="243" x2="9.5" y2="258" stroke="#566f7e" stroke-width="1" stroke-dasharray="1 1"/><line x1="29.5" y1="243" x2="29.5" y2="258" stroke="#566f7e" stroke-width="1" stroke-dasharray="1 1"/><line x1="49.5" y1="243" x2="49.5" y2="258" stroke="#566f7e" stroke-width="1" stroke-dasharray="1 1"/><line x1="69.5" y1="243" x2="69.5" y2="258" stroke="#566f7e" stroke-width="1" stroke-dasharray="1 1"/><line x1="89.5" y1="243" x2="89.5" y2="258" stroke="#566f7e" stroke-width="1" stroke-dasharray="1 1"/><line x1="90" y1="250.5" x2="99" y2="250.5" stroke="#566f7e" stroke-width="1" stroke-dasharray="1 1"/><line x1="9.5" y1="258" x2="9.5" y2="273" stroke="#566f7e" stroke-width="1" stroke-dasharray="1 1"/><line x1="29.5" y1="258" x2="29.5" y2="273" stroke="#566f7e" stroke-width="1" stroke-dasharray="1 1"/><line x1="49.5" y1="258" x2="49.5" y2="273" stroke="#566f7e" stroke-width="1" stroke-dasharray="1 1"/><line x1="69.5" y1="258" x2="69.5" y2="273" stroke="#566f7e" stroke-width="1" stroke-dasharray="1 1"/><line x1="89.5" y1="258" x2="89.5" y2="273" stroke="#566f7e" stroke-width="1" stroke-dasharray="1 1"/><line x1="90" y1="265.5" x2="99" y2="265.5" stroke="#566f7e" stroke-width="1" stroke-dasharray="1 1"/><line x1="9.5" y1="273" x2="9.5" y2="288" stroke="#566f7e" stroke-width="1" stroke-dasharray="1 1"/><line x1="29.5" y1="273" x2="29.5" y2="288" stroke="#566f7e" stroke-width="1" stroke-dasharray="1 1"/><line x1="49.5" y1="273" x2="49.5" y2="288" stroke="#566f7e" stroke-width="1" stroke-dasharray="1 1"/><line x1="69.5" y1="273" x2="69.5" y2="288" stroke="#566f7e" stroke-width="1" stroke-dasharray="1 1"/><line x1="89.5" y1="273" x2="89.5" y2="288" stroke="#566f7e" stroke-width="1" stroke-dasharray="1 1"/><line x1="90" y1="280.5" x2="99" y2="280.5" stroke="#566f7e" stroke-width="1" stroke-dasharray="1 1"/><line x1="9.5" y1="288" x2="9.5" y2="303" stroke="#566f7e" stroke-width="1" stroke-dasharray="1 1"/><line x1="29.5" y1="288" x2="29.5" y2="303" stroke="#566f7e" stroke-width="1" stroke-dasharray="1 1"/><line x1="49.5" y1="288" x2="49.5" y2="303" stroke="#566f7e" stroke-width="1" stroke-dasharray="1 1"/><line x1="69.5" y1="288" x2="69.5" y2="303" stroke="#566f7e" stroke-width="1" stroke-dasharray="1 1"/><line x1="89.5" y1="288" x2="89.5" y2="303" stroke="#566f7e" stroke-width="1" stroke-dasharray="1 1"/><line x1="90" y1="295.5" x2="99" y2="295.5" stroke="#566f7e" stroke-width="1" stroke-dasharray="1 1"/><line x1="9.5" y1="303" x2="9.5" y2="318" stroke="#566f7e" stroke-width="1" stroke-dasharray="1 1"/><line x1="29.5" y1="303" x2="29.5" y2="318" stroke="#566f7e" stroke-width="1" stroke-dasharray="1 1"/><line x1="49.5" y1="303" x2="49.5" y2="318" stroke="#566f7e" stroke-width="1" stroke-dasharray="1 1"/><line x1="69.5" y1="303" x2="69.5" y2="318" stroke="#566f7e" stroke-width="1" stroke-dasharray="1 1"/><line x1="89.5" y1="303" x2="89.5" y2="318" stroke="#566f7e" stroke-width="1" stroke-dasharray="1 1"/><line x1="90" y1="310.5" x2="99" y2="310.5" stroke="#566f7e" stroke-width="1" stroke-dasharray="1 1"/><line x1="9.5" y1="318" x2="9.5" y2="333" stroke="#566f7e" stroke-width="1" stroke-dasharray="1 1"/><line x1="29.5" y1="318" x2="29.5" y2="333" stroke="#566f7e" stroke-width="1" stroke-dasharray="1 1"/><line x1="49.5" y1="318" x2="49.5" y2="333" stroke="#566f7e" stroke-width="1" stroke-dasharray="1 1"/><line x1="69.5" y1="318" x2="69.5" y2="333" stroke="#566f7e" stroke-width="1" stroke-dasharray="1 1"/><line x1="89.5" y1="318" x2="89.5" y2="333" stroke="#566f7e" stroke-width="1" stroke-dasharray="1 1"/><line x1="90" y1="325.5" x2="99" y2="325.5" stroke="#566f7e" stroke-width="1" stroke-dasharray="1 1"/><line x1="9.5" y1="333" x2="9.5" y2="348" stroke="#566f7e" stroke-width="1" stroke-dasharray="1 1"/><line x1="29.5" y1="333" x2="29.5" y2="348" stroke="#566f7e" stroke-width="1" stroke-dasharray="1 1"/><line x1="49.5" y1="333" x2="49.5" y2="348" stroke="#566f7e" stroke-width="1" stroke-dasharray="1 1"/><line x1="69.5" y1="333" x2="69.5" y2="348" stroke="#566f7e" stroke-width="1" stroke-dasharray="1 1"/><line x1="89.5" y1="333" x2="89.5" y2="348" stroke="#566f7e" stroke-width="1" stroke-dasharray="1 1"/><line x1="90" y1="340.5" x2="99" y2="340.5" stroke="#566f7e" stroke-width="1" stroke-dasharray="1 1"/><line x1="9.5" y1="348" x2="9.5" y2="363" stroke="#566f7e" stroke-width="1" stroke-dasharray="1 1"/><line x1="29.5" y1="348" x2="29.5" y2="363" stroke="#566f7e" stroke-width="1" stroke-dasharray="1 1"/><line x1="49.5" y1="348" x2="49.5" y2="363" stroke="#566f7e" stroke-width="1" stroke-dasharray="1 1"/><line x1="69.5" y1="348" x2="69.5" y2="363" stroke="#566f7e" stroke-width="1" stroke-dasharray="1 1"/><line x1="89.5" y1="348" x2="89.5" y2="363" stroke="#566f7e" stroke-width="1" stroke-dasharray="1 1"/><line x1="90" y1="355.5" x2="99" y2="355.5" stroke="#566f7e" stroke-width="1" stroke-dasharray="1 1"/><line x1="9.5" y1="363" x2="9.5" y2="378" stroke="#566f7e" stroke-width="1" stroke-dasharray="1 1"/><line x1="29.5" y1="363" x2="29.5" y2="378" stroke="#566f7e" stroke-width="1" stroke-dasharray="1 1"/><line x1="49.5" y1="363" x2="49.5" y2="378" stroke="#566f7e" stroke-width="1" stroke-dasharray="1 1"/><line x1="69.5" y1="363" x2="69.5" y2="378" stroke="#566f7e" stroke-width="1" stroke-dasharray="1 1"/><line x1="89.5" y1="363" x2="89.5" y2="378" stroke="#566f7e" stroke-width="1" stroke-dasharray="1 1"/><line x1="90" y1="370.5" x2="99" y2="370.5" stroke="#566f7e" stroke-width="1" stroke-dasharray="1 1"/><line x1="9.5" y1="378" x2="9.5" y2="393" stroke="#566f7e" stroke-width="1" stroke-dasharray="1 1"/><line x1="29.5" y1="378" x2="29.5" y2="393" stroke="#566f7e" stroke-width="1" stroke-dasharray="1 1"/><line x1="49.5" y1="378" x2="49.5" y2="393" stroke="#566f7e" stroke-width="1" stroke-dasharray="1 1"/><line x1="69.5" y1="378" x2="69.5" y2="393" stroke="#566f7e" stroke-width="1" stroke-dasharray="1 1"/><line x1="89.5" y1="378" x2="89.5" y2="393" stroke="#566f7e" stroke-width="1" stroke-dasharray="1 1"/><line x1="90" y1="385.5" x2="99" y2="385.5" stroke="#566f7e" stroke-width="1" stroke-dasharray="1 1"/><line x1="9.5" y1="393" x2="9.5" y2="408" stroke="#566f7e" stroke-width="1" stroke-dasharray="1 1"/><line x1="29.5" y1="393" x2="29.5" y2="408" stroke="#566f7e" stroke-width="1" stroke-dasharray="1 1"/><line x1="49.5" y1="393" x2="49.5" y2="408" stroke="#566f7e" stroke-width="1" stroke-dasharray="1 1"/><line x1="69.5" y1="393" x2="69.5" y2="408" stroke="#566f7e" stroke-width="1" stroke-dasharray="1 1"/><line x1="89.5" y1="393" x2="89.5" y2="408" stroke="#566f7e" stroke-width="1" stroke-dasharray="1 1"/><line x1="90" y1="400.5" x2="99" y2="400.5" stroke="#566f7e" stroke-width="1" stroke-dasharray="1 1"/><line x1="9.5" y1="408" x2="9.5" y2="423" stroke="#566f7e" stroke-width="1" stroke-dasharray="1 1"/><line x1="29.5" y1="408" x2="29.5" y2="423" stroke="#566f7e" stroke-width="1" stroke-dasharray="1 1"/><line x1="49.5" y1="408" x2="49.5" y2="423" stroke="#566f7e" stroke-width="1" stroke-dasharray="1 1"/><line x1="69.5" y1="408" x2="69.5" y2="423" stroke="#566f7e" stroke-width="1" stroke-dasharray="1 1"/><line x1="89.5" y1="408" x2="89.5" y2="423" stroke="#566f7e" stroke-width="1" stroke-dasharray="1 1"/><line x1="90" y1="415.5" x2="99" y2="415.5" stroke="#566f7e" stroke-width="1" stroke-dasharray="1 1"/><line x1="9.5" y1="423" x2="9.5" y2="438" stroke="#566f7e" stroke-width="1" stroke-dasharray="1 1"/><line x1="29.5" y1="423" x2="29.5" y2="438" stroke="#566f7e" stroke-width="1" stroke-dasharray="1 1"/><line x1="49.5" y1="423" x2="49.5" y2="438" stroke="#566f7e" stroke-width="1" stroke-dasharray="1 1"/><line x1="69.5" y1="423" x2="69.5" y2="438" stroke="#566f7e" stroke-width="1" stroke-dasharray="1 1"/><line x1="89.5" y1="423" x2="89.5" y2="438" stroke="#566f7e" stroke-width="1" stroke-dasharray="1 1"/><line x1="90" y1="430.5" x2="99" y2="430.5" stroke="#566f7e" stroke-width="1" stroke-dasharray="1 1"/><line x1="9.5" y1="438" x2="9.5" y2="453" stroke="#566f7e" stroke-width="1" stroke-dasharray="1 1"/><line x1="29.5" y1="438" x2="29.5" y2="453" stroke="#566f7e" stroke-width="1" stroke-dasharray="1 1"/><line x1="49.5" y1="438" x2="49.5" y2="453" stroke="#566f7e" stroke-width="1" stroke-dasharray="1 1"/><line x1="69.5" y1="438" x2="69.5" y2="453" stroke="#566f7e" stroke-width="1" stroke-dasharray="1 1"/><line x1="89.5" y1="438" x2="89.5" y2="453" stroke="#566f7e" stroke-width="1" stroke-dasharray="1 1"/><line x1="90" y1="445.5" x2="99" y2="445.5" stroke="#566f7e" stroke-width="1" stroke-dasharray="1 1"/><line x1="9.5" y1="453" x2="9.5" y2="468" stroke="#566f7e" stroke-width="1" stroke-dasharray="1 1"/><line x1="29.5" y1="453" x2="29.5" y2="468" stroke="#566f7e" stroke-width="1" stroke-dasharray="1 1"/><line x1="49.5" y1="453" x2="49.5" y2="468" stroke="#566f7e" stroke-width="1" stroke-dasharray="1 1"/><line x1="69.5" y1="453" x2="69.5" y2="468" stroke="#566f7e" stroke-width="1" stroke-dasharray="1 1"/><line x1="89.5" y1="453" x2="89.5" y2="468" stroke="#566f7e" stroke-width="1" stroke-dasharray="1 1"/><line x1="90" y1="460.5" x2="99" y2="460.5" stroke="#566f7e" stroke-width="1" stroke-dasharray="1 1"/><line x1="9.5" y1="468" x2="9.5" y2="483" stroke="#566f7e" stroke-width="1" stroke-dasharray="1 1"/><line x1="29.5" y1="468" x2="29.5" y2="483" stroke="#566f7e" stroke-width="1" stroke-dasharray="1 1"/><line x1="49.5" y1="468" x2="49.5" y2="483" stroke="#566f7e" stroke-width="1" stroke-dasharray="1 1"/><line x1="69.5" y1="468" x2="69.5" y2="483" stroke="#566f7e" stroke-width="1" stroke-dasharray="1 1"/><line x1="89.5" y1="468" x2="89.5" y2="483" stroke="#566f7e" stroke-width="1" stroke-dasharray="1 1"/><line x1="90" y1="475.5" x2="99" y2="475.5" stroke="#566f7e" stroke-width="1" stroke-dasharray="1 1"/><line x1="9.5" y1="483" x2="9.5" y2="498" stroke="#566f7e" stroke-width="1" stroke-dasharray="1 1"/><line x1="29.5" y1="483" x2="29.5" y2="498" stroke="#566f7e" stroke-width="1" stroke-dasharray="1 1"/><line x1="49.5" y1="483" x2="49.5" y2="498" stroke="#566f7e" stroke-width="1" stroke-dasharray="1 1"/><line x1="69.5" y1="483" x2="69.5" y2="498" stroke="#566f7e" stroke-width="1" stroke-dasharray="1 1"/><line x1="89.5" y1="483" x2="89.5" y2="498" stroke="#566f7e" stroke-width="1" stroke-dasharray="1 1"/><line x1="90" y1="490.5" x2="99" y2="490.5" stroke="#566f7e" stroke-width="1" stroke-dasharray="1 1"/><line x1="9.5" y1="498" x2="9.5" y2="513" stroke="#566f7e" stroke-width="1" stroke-dasharray="1 1"/><line x1="29.5" y1="498" x2="29.5" y2="513" stroke="#566f7e" stroke-width="1" stroke-dasharray="1 1"/><line x1="49.5" y1="498" x2="49.5" y2="513" stroke="#566f7e" stroke-width="1" stroke-dasharray="1 1"/><line x1="69.5" y1="498" x2="69.5" y2="513" stroke="#566f7e" stroke-width="1" stroke-dasharray="1 1"/><line x1="89.5" y1="498" x2="89.5" y2="513" stroke="#566f7e" stroke-width="1" stroke-dasharray="1 1"/><line x1="90" y1="505.5" x2="99" y2="505.5" stroke="#566f7e" stroke-width="1" stroke-dasharray="1 1"/><line x1="9.5" y1="513" x2="9.5" y2="528" stroke="#566f7e" stroke-width="1" stroke-dasharray="1 1"/><line x1="29.5" y1="513" x2="29.5" y2="528" stroke="#566f7e" stroke-width="1" stroke-dasharray="1 1"/><line x1="49.5" y1="513" x2="49.5" y2="528" stroke="#566f7e" stroke-width="1" stroke-dasharray="1 1"/><line x1="69.5" y1="513" x2="69.5" y2="528" stroke="#566f7e" stroke-width="1" stroke-dasharray="1 1"/><line x1="89.5" y1="513" x2="89.5" y2="528" stroke="#566f7e" stroke-width="1" stroke-dasharray="1 1"/><line x1="90" y1="520.5" x2="99" y2="520.5" stroke="#566f7e" stroke-width="1" stroke-dasharray="1 1"/><line x1="9.5" y1="528" x2="9.5" y2="543" stroke="#566f7e" stroke-width="1" stroke-dasharray="1 1"/><line x1="29.5" y1="528" x2="29.5" y2="543" stroke="#566f7e" stroke-width="1" stroke-dasharray="1 1"/><line x1="49.5" y1="528" x2="49.5" y2="543" stroke="#566f7e" stroke-width="1" stroke-dasharray="1 1"/><line x1="69.5" y1="528" x2="69.5" y2="543" stroke="#566f7e" stroke-width="1" stroke-dasharray="1 1"/><line x1="89.5" y1="528" x2="89.5" y2="543" stroke="#566f7e" stroke-width="1" stroke-dasharray="1 1"/><line x1="90" y1="535.5" x2="99" y2="535.5" stroke="#566f7e" stroke-width="1" stroke-dasharray="1 1"/><line x1="9.5" y1="543" x2="9.5" y2="558" stroke="#566f7e" stroke-width="1" stroke-dasharray="1 1"/><line x1="29.5" y1="543" x2="29.5" y2="558" stroke="#566f7e" stroke-width="1" stroke-dasharray="1 1"/><line x1="49.5" y1="543" x2="49.5" y2="558" stroke="#566f7e" stroke-width="1" stroke-dasharray="1 1"/><line x1="69.5" y1="543" x2="69.5" y2="558" stroke="#566f7e" stroke-width="1" stroke-dasharray="1 1"/><line x1="89.5" y1="543" x2="89.5" y2="558" stroke="#566f7e" stroke-width="1" stroke-dasharray="1 1"/><line x1="90" y1="550.5" x2="99" y2="550.5" stroke="#566f7e" stroke-width="1" stroke-dasharray="1 1"/><line x1="9.5" y1="558" x2="9.5" y2="573" stroke="#566f7e" stroke-width="1" stroke-dasharray="1 1"/><line x1="29.5" y1="558" x2="29.5" y2="573" stroke="#566f7e" stroke-width="1" stroke-dasharray="1 1"/><line x1="49.5" y1="558" x2="49.5" y2="573" stroke="#566f7e" stroke-width="1" stroke-dasharray="1 1"/><line x1="69.5" y1="558" x2="69.5" y2="573" stroke="#566f7e" stroke-width="1" stroke-dasharray="1 1"/><line x1="89.5" y1="558" x2="89.5" y2="573" stroke="#566f7e" stroke-width="1" stroke-dasharray="1 1"/><line x1="90" y1="565.5" x2="99" y2="565.5" stroke="#566f7e" stroke-width="1" stroke-dasharray="1 1"/><line x1="9.5" y1="573" x2="9.5" y2="588" stroke="#566f7e" stroke-width="1" stroke-dasharray="1 1"/><line x1="29.5" y1="573" x2="29.5" y2="588" stroke="#566f7e" stroke-width="1" stroke-dasharray="1 1"/><line x1="49.5" y1="573" x2="49.5" y2="588" stroke="#566f7e" stroke-width="1" stroke-dasharray="1 1"/><line x1="69.5" y1="573" x2="69.5" y2="588" stroke="#566f7e" stroke-width="1" stroke-dasharray="1 1"/><line x1="89.5" y1="573" x2="89.5" y2="588" stroke="#566f7e" stroke-width="1" stroke-dasharray="1 1"/><line x1="90" y1="580.5" x2="99" y2="580.5" stroke="#566f7e" stroke-width="1" stroke-dasharray="1 1"/><line x1="9.5" y1="588" x2="9.5" y2="603" stroke="#566f7e" stroke-width="1" stroke-dasharray="1 1"/><line x1="29.5" y1="588" x2="29.5" y2="603" stroke="#566f7e" stroke-width="1" stroke-dasharray="1 1"/><line x1="49.5" y1="588" x2="49.5" y2="603" stroke="#566f7e" stroke-width="1" stroke-dasharray="1 1"/><line x1="69.5" y1="588" x2="69.5" y2="603" stroke="#566f7e" stroke-width="1" stroke-dasharray="1 1"/><line x1="89.5" y1="588" x2="89.5" y2="603" stroke="#566f7e" stroke-width="1" stroke-dasharray="1 1"/><line x1="90" y1="595.5" x2="99" y2="595.5" stroke="#566f7e" stroke-width="1" stroke-dasharray="1 1"/><line x1="9.5" y1="603" x2="9.5" y2="618" stroke="#566f7e" stroke-width="1" stroke-dasharray="1 1"/><line x1="29.5" y1="603" x2="29.5" y2="618" stroke="#566f7e" stroke-width="1" stroke-dasharray="1 1"/><line x1="49.5" y1="603" x2="49.5" y2="618" stroke="#566f7e" stroke-width="1" stroke-dasharray="1 1"/><line x1="69.5" y1="603" x2="69.5" y2="618" stroke="#566f7e" stroke-width="1" stroke-dasharray="1 1"/><line x1="89.5" y1="603" x2="89.5" y2="618" stroke="#566f7e" stroke-width="1" stroke-dasharray="1 1"/><line x1="90" y1="610.5" x2="99" y2="610.5" stroke="#566f7e" stroke-width="1" stroke-dasharray="1 1"/></svg></div><div class="a chk" style="left:231px;top:99px;width:16px;height:639px"></div><div class="a sbh" style="left:231px;top:99px;width:16px;height:15px"><svg class="a" style="left:-1px;top:-1px" width="16" height="15"><polygon points="4.0,9.5 12.0,9.5 8.0,5.5" fill="#000"/></svg></div><div class="a sb" style="left:231px;top:114px;width:16px;height:324px"></div><svg class="a" style="left:234px;top:266px" width="12" height="20"><rect x="0" y="0" width="2" height="1" fill="#6b8797"/><rect x="0" y="1" width="1" height="1" fill="#6b8797"/><rect x="4" y="0" width="2" height="1" fill="#6b8797"/><rect x="4" y="1" width="1" height="1" fill="#6b8797"/><rect x="8" y="0" width="2" height="1" fill="#6b8797"/><rect x="8" y="1" width="1" height="1" fill="#6b8797"/><rect x="0" y="4" width="2" height="1" fill="#6b8797"/><rect x="0" y="5" width="1" height="1" fill="#6b8797"/><rect x="4" y="4" width="2" height="1" fill="#6b8797"/><rect x="4" y="5" width="1" height="1" fill="#6b8797"/><rect x="8" y="4" width="2" height="1" fill="#6b8797"/><rect x="8" y="5" width="1" height="1" fill="#6b8797"/><rect x="0" y="8" width="2" height="1" fill="#6b8797"/><rect x="0" y="9" width="1" height="1" fill="#6b8797"/><rect x="4" y="8" width="2" height="1" fill="#6b8797"/><rect x="4" y="9" width="1" height="1" fill="#6b8797"/><rect x="8" y="8" width="2" height="1" fill="#6b8797"/><rect x="8" y="9" width="1" height="1" fill="#6b8797"/><rect x="0" y="12" width="2" height="1" fill="#6b8797"/><rect x="0" y="13" width="1" height="1" fill="#6b8797"/><rect x="4" y="12" width="2" height="1" fill="#6b8797"/><rect x="4" y="13" width="1" height="1" fill="#6b8797"/><rect x="8" y="12" width="2" height="1" fill="#6b8797"/><rect x="8" y="13" width="1" height="1" fill="#6b8797"/><rect x="0" y="16" width="2" height="1" fill="#6b8797"/><rect x="0" y="17" width="1" height="1" fill="#6b8797"/><rect x="4" y="16" width="2" height="1" fill="#6b8797"/><rect x="4" y="17" width="1" height="1" fill="#6b8797"/><rect x="8" y="16" width="2" height="1" fill="#6b8797"/><rect x="8" y="17" width="1" height="1" fill="#6b8797"/></svg><div class="a sbh" style="left:231px;top:707px;width:16px;height:15px"><svg class="a" style="left:-1px;top:-1px" width="16" height="15"><polygon points="4.0,9.5 12.0,9.5 8.0,5.5" fill="#000"/></svg></div><div class="a sbh" style="left:231px;top:722px;width:16px;height:16px"><svg class="a" style="left:-1px;top:-1px" width="16" height="16"><polygon points="4.0,6.0 12.0,6.0 8.0,10.0" fill="#000"/></svg></div><div class="a chk" style="left:10px;top:738px;width:221px;height:15px"></div><div class="a" style="left:231px;top:738px;width:16px;height:16px;background:#9db8c7"></div><div class="a sbh" style="left:10px;top:738px;width:15px;height:16px"><svg class="a" style="left:-1px;top:-1px" width="15" height="16"><polygon points="9.5,4.0 9.5,12.0 5.5,8.0" fill="#000"/></svg></div><div class="a sbh" style="left:25px;top:738px;width:80px;height:16px"></div><svg class="a" style="left:55px;top:740px" width="20" height="12"><rect x="0" y="0" width="2" height="1" fill="#6b8797"/><rect x="0" y="1" width="1" height="1" fill="#6b8797"/><rect x="4" y="0" width="2" height="1" fill="#6b8797"/><rect x="4" y="1" width="1" height="1" fill="#6b8797"/><rect x="8" y="0" width="2" height="1" fill="#6b8797"/><rect x="8" y="1" width="1" height="1" fill="#6b8797"/><rect x="12" y="0" width="2" height="1" fill="#6b8797"/><rect x="12" y="1" width="1" height="1" fill="#6b8797"/><rect x="16" y="0" width="2" height="1" fill="#6b8797"/><rect x="16" y="1" width="1" height="1" fill="#6b8797"/><rect x="0" y="4" width="2" height="1" fill="#6b8797"/><rect x="0" y="5" width="1" height="1" fill="#6b8797"/><rect x="4" y="4" width="2" height="1" fill="#6b8797"/><rect x="4" y="5" width="1" height="1" fill="#6b8797"/><rect x="8" y="4" width="2" height="1" fill="#6b8797"/><rect x="8" y="5" width="1" height="1" fill="#6b8797"/><rect x="12" y="4" width="2" height="1" fill="#6b8797"/><rect x="12" y="5" width="1" height="1" fill="#6b8797"/><rect x="16" y="4" width="2" height="1" fill="#6b8797"/><rect x="16" y="5" width="1" height="1" fill="#6b8797"/><rect x="0" y="8" width="2" height="1" fill="#6b8797"/><rect x="0" y="9" width="1" height="1" fill="#6b8797"/><rect x="4" y="8" width="2" height="1" fill="#6b8797"/><rect x="4" y="9" width="1" height="1" fill="#6b8797"/><rect x="8" y="8" width="2" height="1" fill="#6b8797"/><rect x="8" y="9" width="1" height="1" fill="#6b8797"/><rect x="12" y="8" width="2" height="1" fill="#6b8797"/><rect x="12" y="9" width="1" height="1" fill="#6b8797"/><rect x="16" y="8" width="2" height="1" fill="#6b8797"/><rect x="16" y="9" width="1" height="1" fill="#6b8797"/></svg><div class="a sbh" style="left:200px;top:738px;width:15px;height:16px"><svg class="a" style="left:-1px;top:-1px" width="15" height="16"><polygon points="9.5,4.0 9.5,12.0 5.5,8.0" fill="#000"/></svg></div><div class="a sbh" style="left:215px;top:738px;width:16px;height:16px"><svg class="a" style="left:-1px;top:-1px" width="16" height="16"><polygon points="6.0,4.0 6.0,12.0 10.0,8.0" fill="#000"/></svg></div>
<div class="a sunk" style="left:7px;top:763px;width:242px;height:21px;border:1px solid #5c7583;border-radius:3px"></div>
<svg class="a" style="left:251px;top:325px" width="3" height="225" shape-rendering="crispEdges"><rect x="0" y="0" width="2" height="2" fill="#86a2b2"/><rect x="1" y="1" width="2" height="2" fill="#fff"/><rect x="0" y="5" width="2" height="2" fill="#86a2b2"/><rect x="1" y="6" width="2" height="2" fill="#fff"/><rect x="0" y="10" width="2" height="2" fill="#86a2b2"/><rect x="1" y="11" width="2" height="2" fill="#fff"/><rect x="0" y="15" width="2" height="2" fill="#86a2b2"/><rect x="1" y="16" width="2" height="2" fill="#fff"/><rect x="0" y="20" width="2" height="2" fill="#86a2b2"/><rect x="1" y="21" width="2" height="2" fill="#fff"/><rect x="0" y="25" width="2" height="2" fill="#86a2b2"/><rect x="1" y="26" width="2" height="2" fill="#fff"/><rect x="0" y="30" width="2" height="2" fill="#86a2b2"/><rect x="1" y="31" width="2" height="2" fill="#fff"/><rect x="0" y="35" width="2" height="2" fill="#86a2b2"/><rect x="1" y="36" width="2" height="2" fill="#fff"/><rect x="0" y="40" width="2" height="2" fill="#86a2b2"/><rect x="1" y="41" width="2" height="2" fill="#fff"/><rect x="0" y="45" width="2" height="2" fill="#86a2b2"/><rect x="1" y="46" width="2" height="2" fill="#fff"/><rect x="0" y="50" width="2" height="2" fill="#86a2b2"/><rect x="1" y="51" width="2" height="2" fill="#fff"/><rect x="0" y="55" width="2" height="2" fill="#86a2b2"/><rect x="1" y="56" width="2" height="2" fill="#fff"/><rect x="0" y="60" width="2" height="2" fill="#86a2b2"/><rect x="1" y="61" width="2" height="2" fill="#fff"/><rect x="0" y="65" width="2" height="2" fill="#86a2b2"/><rect x="1" y="66" width="2" height="2" fill="#fff"/><rect x="0" y="70" width="2" height="2" fill="#86a2b2"/><rect x="1" y="71" width="2" height="2" fill="#fff"/><rect x="0" y="75" width="2" height="2" fill="#86a2b2"/><rect x="1" y="76" width="2" height="2" fill="#fff"/><rect x="0" y="80" width="2" height="2" fill="#86a2b2"/><rect x="1" y="81" width="2" height="2" fill="#fff"/><rect x="0" y="85" width="2" height="2" fill="#86a2b2"/><rect x="1" y="86" width="2" height="2" fill="#fff"/><rect x="0" y="90" width="2" height="2" fill="#86a2b2"/><rect x="1" y="91" width="2" height="2" fill="#fff"/><rect x="0" y="95" width="2" height="2" fill="#86a2b2"/><rect x="1" y="96" width="2" height="2" fill="#fff"/><rect x="0" y="100" width="2" height="2" fill="#86a2b2"/><rect x="1" y="101" width="2" height="2" fill="#fff"/><rect x="0" y="105" width="2" height="2" fill="#86a2b2"/><rect x="1" y="106" width="2" height="2" fill="#fff"/><rect x="0" y="110" width="2" height="2" fill="#86a2b2"/><rect x="1" y="111" width="2" height="2" fill="#fff"/><rect x="0" y="115" width="2" height="2" fill="#86a2b2"/><rect x="1" y="116" width="2" height="2" fill="#fff"/><rect x="0" y="120" width="2" height="2" fill="#86a2b2"/><rect x="1" y="121" width="2" height="2" fill="#fff"/><rect x="0" y="125" width="2" height="2" fill="#86a2b2"/><rect x="1" y="126" width="2" height="2" fill="#fff"/><rect x="0" y="130" width="2" height="2" fill="#86a2b2"/><rect x="1" y="131" width="2" height="2" fill="#fff"/><rect x="0" y="135" width="2" height="2" fill="#86a2b2"/><rect x="1" y="136" width="2" height="2" fill="#fff"/><rect x="0" y="140" width="2" height="2" fill="#86a2b2"/><rect x="1" y="141" width="2" height="2" fill="#fff"/><rect x="0" y="145" width="2" height="2" fill="#86a2b2"/><rect x="1" y="146" width="2" height="2" fill="#fff"/><rect x="0" y="150" width="2" height="2" fill="#86a2b2"/><rect x="1" y="151" width="2" height="2" fill="#fff"/><rect x="0" y="155" width="2" height="2" fill="#86a2b2"/><rect x="1" y="156" width="2" height="2" fill="#fff"/><rect x="0" y="160" width="2" height="2" fill="#86a2b2"/><rect x="1" y="161" width="2" height="2" fill="#fff"/><rect x="0" y="165" width="2" height="2" fill="#86a2b2"/><rect x="1" y="166" width="2" height="2" fill="#fff"/><rect x="0" y="170" width="2" height="2" fill="#86a2b2"/><rect x="1" y="171" width="2" height="2" fill="#fff"/><rect x="0" y="175" width="2" height="2" fill="#86a2b2"/><rect x="1" y="176" width="2" height="2" fill="#fff"/><rect x="0" y="180" width="2" height="2" fill="#86a2b2"/><rect x="1" y="181" width="2" height="2" fill="#fff"/><rect x="0" y="185" width="2" height="2" fill="#86a2b2"/><rect x="1" y="186" width="2" height="2" fill="#fff"/><rect x="0" y="190" width="2" height="2" fill="#86a2b2"/><rect x="1" y="191" width="2" height="2" fill="#fff"/><rect x="0" y="195" width="2" height="2" fill="#86a2b2"/><rect x="1" y="196" width="2" height="2" fill="#fff"/><rect x="0" y="200" width="2" height="2" fill="#86a2b2"/><rect x="1" y="201" width="2" height="2" fill="#fff"/><rect x="0" y="205" width="2" height="2" fill="#86a2b2"/><rect x="1" y="206" width="2" height="2" fill="#fff"/><rect x="0" y="210" width="2" height="2" fill="#86a2b2"/><rect x="1" y="211" width="2" height="2" fill="#fff"/><rect x="0" y="215" width="2" height="2" fill="#86a2b2"/><rect x="1" y="216" width="2" height="2" fill="#fff"/><rect x="0" y="220" width="2" height="2" fill="#86a2b2"/><rect x="1" y="221" width="2" height="2" fill="#fff"/></svg><div class="a" style="left:255px;top:96px;width:939px;height:688px;border-left:1px solid #fff;border-top:1px solid #fff;border-right:1px solid #0c0c0c;border-bottom:1px solid #0c0c0c"></div><div class="a" style="left:256px;top:97px;width:937px;height:686px;border-left:1px solid #d6e6ee;border-top:1px solid #d6e6ee"></div><div class="a" style="left:257px;top:98px;width:936px;height:685px;border-right:1px solid #6b8494;border-bottom:1px solid #6b8494"></div><div class="a nw" style="left:260px;top:104px;width:940px;text-align:center;font-size:19px;font-weight:bold;font-style:italic;line-height:28px;letter-spacing:.28px">Table: DB</div><div class="a" style="left:266px;top:161px;width:917px;height:612px;border:1px solid #5c7584;border-top-color:#7a94a3;border-right-color:#7d97a6;border-bottom-color:#7d97a6;border-radius:3px"></div><div class="a" style="left:268px;top:163px;width:913px;height:608px;border:1px solid #566f7e;border-radius:2px"></div><div class="a" style="left:266px;top:140px;width:55px;height:23px;border:1px solid #5a7382;border-bottom:none;border-radius:4px 4px 0 0;background:#9db8c7"></div><div class="a nw" style="left:278px;top:144px;line-height:16px">Table</div><div class="a nw" style="left:279px;top:174px;line-height:16px">Name: <b style="margin-left:1.5px">DB</b></div><div class="a nw" style="left:279px;top:195px;line-height:16px;letter-spacing:-.13px">Table offset, size:</div><div class="a sunk" style="left:394px;top:192px;width:110px;height:21px;border:1px solid #5c7583;border-radius:3px;padding-left:4px;line-height:19px">0</div><div class="a sunk" style="left:510px;top:192px;width:110px;height:21px;border:1px solid #5c7583;border-radius:3px;padding-left:4px;line-height:19px">100</div><div class="a nw" style="left:279px;top:216px;line-height:16px">Data:</div><div class="a" style="left:279px;top:234px;width:891px;height:522px;border:1px solid #6a8391;border-radius:4px;background:#87a0ae"></div><div class="a" style="left:281px;top:236px;width:887px;height:518px;border:1px solid #566e7c;border-right-color:#87a0ae;border-bottom-color:#87a0ae;border-radius:2px;background:#9db8c7"></div><div class="a" style="left:282px;top:237px;width:869px;height:517px;overflow:hidden;background:#c5c5c5"><div class="hd" style="left:0;top:0;width:26px;height:23px"></div><div class="hd" style="left:26px;top:0;width:84px;height:22px;border-bottom-width:1px;line-height:22px">ID</div><div class="hd" style="left:110px;top:0;width:60px;height:22px;border-bottom-width:1px;line-height:22px">TYPE</div><div class="hd" style="left:170px;top:0;width:84px;height:22px;border-bottom-width:1px;line-height:22px">NAME</div><div class="hd" style="left:254px;top:0;width:84px;height:22px;border-bottom-width:1px;line-height:22px">DESCR</div><div class="hd" style="left:338px;top:0;width:84px;height:22px;border-bottom-width:1px;line-height:22px">ADDR</div><div class="hd" style="left:422px;top:0;width:84px;height:22px;border-bottom-width:1px;line-height:22px">CODEPAGE</div><div class="hd" style="left:506px;top:0;width:28px;height:22px;border-bottom-width:1px;line-height:22px">EN</div><div class="hd" style="left:534px;top:0;width:84px;height:22px;border-bottom-width:1px;line-height:22px">uk#NAME</div><div class="hd" style="left:618px;top:0;width:84px;height:22px;border-bottom-width:1px;line-height:22px">uk#DESCR</div><div class="hd" style="left:702px;top:0;width:84px;height:22px;border-bottom-width:1px;line-height:22px">ru#NAME</div><div class="hd" style="left:786px;top:0;width:84px;height:22px;border-bottom-width:1px;line-height:22px">ru#DESCR</div><div class="vh" style="top:23px;height:46px">1</div><div class="cell" style="left:25px;top:22px;width:84px;height:46px"><span style="top:15px">LibBD</span></div><div class="cell" style="left:109px;top:22px;width:60px;height:46px"><span style="top:15px">MySQL</span></div><div class="cell" style="left:169px;top:22px;width:84px;height:46px"><span style="top:7px">Functions<br>libraries</span></div><div class="cell" style="left:253px;top:22px;width:84px;height:46px"><span style="top:0px">Many<br>functions<br>libraries.</span></div><div class="cell" style="left:337px;top:22px;width:84px;height:46px"><span style="top:15px;letter-spacing:-.25px">server.diya.org;roman;123456;oscadaDemoSt</span></div><div class="cell" style="left:421px;top:22px;width:84px;height:46px"><span style="top:15px">UTF-8</span></div><div class="cell" style="left:505px;top:22px;width:28px;height:46px"><span style="top:15px">0</span></div><div class="cell" style="left:533px;top:22px;width:84px;height:46px"><span style="top:7px">Бібліотеки<br>функцій</span></div><div class="cell" style="left:617px;top:22px;width:84px;height:46px"><span style="top:0px">Декілька<br>бібліотек<br>функцій.</span></div><div class="cell" style="left:701px;top:22px;width:84px;height:46px"><span style="top:7px">Библиотеки<br>функций</span></div><div class="cell" style="left:785px;top:22px;width:84px;height:46px"><span style="top:0px">Несколько<br>библиотек<br>функций.</span></div><div class="vh" style="top:69px;height:31px">2</div><div class="cell" style="left:25px;top:68px;width:84px;height:31px"><span style="top:7px">GenDB</span></div><div class="cell" style="left:109px;top:68px;width:60px;height:31px"><span style="top:7px">SQLite</span></div><div class="cell" style="left:169px;top:68px;width:84px;height:31px"><span style="top:7px;letter-spacing:-.17px">Generic DB</span></div><div class="cell" style="left:253px;top:68px;width:84px;height:31px"></div><div class="cell" style="left:337px;top:68px;width:84px;height:31px"><span style="top:7px;letter-spacing:-.08px">./AGLKS/St.db</span></div><div class="cell" style="left:421px;top:68px;width:84px;height:31px"><span style="top:7px">UTF-8</span></div><div class="cell" style="left:505px;top:68px;width:28px;height:31px"><span style="top:7px">0</span></div><div class="cell" style="left:533px;top:68px;width:84px;height:31px"><span style="top:7px">Основна БД</span></div><div class="cell" style="left:617px;top:68px;width:84px;height:31px"></div><div class="cell" style="left:701px;top:68px;width:84px;height:31px"><span style="top:0px">Основная<br>БД</span></div><div class="cell" style="left:785px;top:68px;width:84px;height:31px"></div><div class="vh" style="top:100px;height:46px">3</div><div class="cell" style="left:25px;top:99px;width:84px;height:46px"><span style="top:15px">LibDB</span></div><div class="cell" style="left:109px;top:99px;width:60px;height:46px"><span style="top:15px">SQLite</span></div><div class="cell" style="left:169px;top:99px;width:84px;height:46px"><span style="top:7px">Functions<br>libraries</span></div><div class="cell" style="left:253px;top:99px;width:84px;height:46px"><span style="top:0px">Many<br>functions<br>libraries.</span></div><div class="cell" style="left:337px;top:99px;width:84px;height:46px"><span style="top:15px">LibsDB/OscadaLibs.db</span></div><div class="cell" style="left:421px;top:99px;width:84px;height:46px"><span style="top:15px">UTF-8</span></div><div class="cell" style="left:505px;top:99px;width:28px;height:46px"><span style="top:15px">1</span></div><div class="cell" style="left:533px;top:99px;width:84px;height:46px"><span style="top:7px">Бібліотеки<br>функцій</span></div><div class="cell" style="left:617px;top:99px;width:84px;height:46px"><span style="top:0px">Декілька<br>бібліотек<br>функцій.</span></div><div class="cell" style="left:701px;top:99px;width:84px;height:46px"><span style="top:7px">Библиотеки<br>функций</span></div><div class="cell" style="left:785px;top:99px;width:84px;height:46px"><span style="top:0px">Несколько<br>библиотек<br>функций.</span></div><div class="vh" style="top:146px;height:147px">4</div><div class="cell" style="left:25px;top:145px;width:84px;height:147px"><span style="top:65px">AnastModel</span></div><div class="cell" style="left:109px;top:145px;width:60px;height:147px"><span style="top:65px">SQLite</span></div><div class="cell" style="left:169px;top:145px;width:84px;height:147px"><span style="top:58px">AGLKS<br>model</span></div><div class="cell" style="left:253px;top:145px;width:84px;height:147px"><span style="top:-2px">AGLKS<br>model<br>contents:<br>-<br>Genericstation;<br>- KM101;<br>- KM102;<br>- KM201;<br>- KM202;<br>- KM301;</span></div><div class="cell" style="left:337px;top:145px;width:84px;height:147px"><span style="top:65px">Model.db</span></div><div class="cell" style="left:421px;top:145px;width:84px;height:147px"><span style="top:65px">UTF-8</span></div><div class="cell" style="left:505px;top:145px;width:28px;height:147px"><span style="top:65px">1</span></div><div class="cell" style="left:533px;top:145px;width:84px;height:147px"><span style="top:58px">Модель<br>АГЛКС</span></div><div class="cell" style="left:617px;top:145px;width:84px;height:147px"><span style="top:-2px">Модель<br>АГЛКС у<br>складі:<br>-<br>Загальностанційка;<br>- KM101;<br>- KM102;<br>- KM201;<br>- KM202;<br>- KM301;</span></div><div class="cell" style="left:701px;top:145px;width:84px;height:147px"><span style="top:58px">Модель<br>АГЛКС</span></div><div class="cell" style="left:785px;top:145px;width:84px;height:147px"><span style="top:-2px">Модель<br>Анастасиевской<br>ГЛКС в<br>составе:<br>-<br>Общестанционка;<br>- KM101;<br>- KM102;<br>- KM201;<br>- KM202;<br>- KM301;</span></div><div class="vh" style="top:293px;height:23px">5</div><div class="cell" style="left:25px;top:292px;width:84px;height:23px"><span style="top:3px">arch</span></div><div class="cell" style="left:109px;top:292px;width:60px;height:23px"><span style="top:3px;letter-spacing:-.25px">FireBird</span></div><div class="cell" style="left:169px;top:292px;width:84px;height:23px"></div><div class="cell" style="left:253px;top:292px;width:84px;height:23px"></div><div class="cell" style="left:337px;top:292px;width:84px;height:23px"><span style="top:3px;letter-spacing:-.08px">/var/tmp/arch.fbd</span></div><div class="cell" style="left:421px;top:292px;width:84px;height:23px"><span style="top:3px">UTF-8</span></div><div class="cell" style="left:505px;top:292px;width:28px;height:23px"><span style="top:3px">0</span></div><div class="cell" style="left:533px;top:292px;width:84px;height:23px"></div><div class="cell" style="left:617px;top:292px;width:84px;height:23px"></div><div class="cell" style="left:701px;top:292px;width:84px;height:23px"></div><div class="cell" style="left:785px;top:292px;width:84px;height:23px"></div><div class="vh" style="top:316px;height:23px">6</div><div class="cell" style="left:25px;top:315px;width:84px;height:23px"><span style="top:3px">testFB</span></div><div class="cell" style="left:109px;top:315px;width:60px;height:23px"><span style="top:3px;letter-spacing:-.25px">FireBird</span></div><div class="cell" style="left:169px;top:315px;width:84px;height:23px"></div><div class="cell" style="left:253px;top:315px;width:84px;height:23px"></div><div class="cell" style="left:337px;top:315px;width:84px;height:23px"><span style="top:3px;letter-spacing:-.25px">server.diya.org:/var/tmp/test.fbd</span></div><div class="cell" style="left:421px;top:315px;width:84px;height:23px"><span style="top:3px">UTF-8</span></div><div class="cell" style="left:505px;top:315px;width:28px;height:23px"><span style="top:3px">0</span></div><div class="cell" style="left:533px;top:315px;width:84px;height:23px"></div><div class="cell" style="left:617px;top:315px;width:84px;height:23px"></div><div class="cell" style="left:701px;top:315px;width:84px;height:23px"></div><div class="cell" style="left:785px;top:315px;width:84px;height:23px"></div><div class="vh" style="top:339px;height:31px">7</div><div class="cell" style="left:25px;top:338px;width:84px;height:31px"><span style="top:7px">GenDB</span></div><div class="cell" style="left:109px;top:338px;width:60px;height:31px"><span style="top:7px">MySQL</span></div><div class="cell" style="left:169px;top:338px;width:84px;height:31px"><span style="top:7px;letter-spacing:-.17px">Generic DB</span></div><div class="cell" style="left:253px;top:338px;width:84px;height:31px"></div><div class="cell" style="left:337px;top:338px;width:84px;height:31px"><span style="top:7px;letter-spacing:-.25px">server.diya.org;roman;123456;oscadaDemoSt</span></div><div class="cell" style="left:421px;top:338px;width:84px;height:31px"><span style="top:7px">UTF-8</span></div><div class="cell" style="left:505px;top:338px;width:28px;height:31px"><span style="top:7px">0</span></div><div class="cell" style="left:533px;top:338px;width:84px;height:31px"><span style="top:7px">Основна БД</span></div><div class="cell" style="left:617px;top:338px;width:84px;height:31px"></div><div class="cell" style="left:701px;top:338px;width:84px;height:31px"><span style="top:0px">Основная<br>БД</span></div><div class="cell" style="left:785px;top:338px;width:84px;height:31px"></div><div class="vh" style="top:370px;height:23px">8</div><div class="cell" style="left:25px;top:369px;width:84px;height:23px"><span style="top:3px">arch</span></div><div class="cell" style="left:109px;top:369px;width:60px;height:23px"><span style="top:3px">MySQL</span></div><div class="cell" style="left:169px;top:369px;width:84px;height:23px"></div><div class="cell" style="left:253px;top:369px;width:84px;height:23px"></div><div class="cell" style="left:337px;top:369px;width:84px;height:23px"><span style="top:3px;letter-spacing:-.25px">server.diya.org;roman;123456;arch</span></div><div class="cell" style="left:421px;top:369px;width:84px;height:23px"></div><div class="cell" style="left:505px;top:369px;width:28px;height:23px"><span style="top:3px">0</span></div><div class="cell" style="left:533px;top:369px;width:84px;height:23px"></div><div class="cell" style="left:617px;top:369px;width:84px;height:23px"></div><div class="cell" style="left:701px;top:369px;width:84px;height:23px"></div><div class="cell" style="left:785px;top:369px;width:84px;height:23px"></div><div class="vh" style="top:393px;height:147px">9</div><div class="cell" style="left:25px;top:392px;width:84px;height:147px"><span style="top:65px">AnastModel</span></div><div class="cell" style="left:109px;top:392px;width:60px;height:147px"><span style="top:65px">MySQL</span></div><div class="cell" style="left:169px;top:392px;width:84px;height:147px"><span style="top:58px">AGLKS<br>model</span></div><div class="cell" style="left:253px;top:392px;width:84px;height:147px"><span style="top:-2px">AGLKS<br>model<br>contents:<br>-<br>Genericstation;<br>- KM101;<br>- KM102;<br>- KM201;<br>- KM202;<br>- KM301;</span></div><div class="cell" style="left:337px;top:392px;width:84px;height:147px"><span style="top:65px;letter-spacing:-.25px">server.diya.org;roman;123456;AnastModel</span></div><div class="cell" style="left:421px;top:392px;width:84px;height:147px"><span style="top:65px">UTF-8</span></div><div class="cell" style="left:505px;top:392px;width:28px;height:147px"><span style="top:65px">0</span></div><div class="cell" style="left:533px;top:392px;width:84px;height:147px"><span style="top:58px">Модель<br>АГЛКС</span></div><div class="cell" style="left:617px;top:392px;width:84px;height:147px"><span style="top:-2px">Модель<br>АГЛКС у<br>складі:<br>-<br>Загальностанційка;<br>- KM101;<br>- KM102;<br>- KM201;<br>- KM202;<br>- KM301;</span></div><div class="cell" style="left:701px;top:392px;width:84px;height:147px"><span style="top:58px">Модель<br>АГЛКС</span></div><div class="cell" style="left:785px;top:392px;width:84px;height:147px"><span style="top:-2px">Модель<br>Анастасиевской<br>ГЛКС в<br>составе:<br>-<br>Общестанционка;<br>- KM101;<br>- KM102;<br>- KM201;<br>- KM202;<br>- KM301;</span></div></div><div class="a chk" style="left:1152px;top:237px;width:15px;height:517px"></div><div class="a sbh" style="left:1152px;top:236px;width:16px;height:16px"><svg class="a" style="left:-1px;top:-1px" width="16" height="16"><polygon points="4.0,10.0 12.0,10.0 8.0,6.0" fill="#000"/></svg></div><div class="a sb" style="left:1152px;top:252px;width:16px;height:190px"></div><svg class="a" style="left:1155px;top:338px" width="12" height="20"><rect x="0" y="0" width="2" height="1" fill="#6b8797"/><rect x="0" y="1" width="1" height="1" fill="#6b8797"/><rect x="4" y="0" width="2" height="1" fill="#6b8797"/><rect x="4" y="1" width="1" height="1" fill="#6b8797"/><rect x="8" y="0" width="2" height="1" fill="#6b8797"/><rect x="8" y="1" width="1" height="1" fill="#6b8797"/><rect x="0" y="4" width="2" height="1" fill="#6b8797"/><rect x="0" y="5" width="1" height="1" fill="#6b8797"/><rect x="4" y="4" width="2" height="1" fill="#6b8797"/><rect x="4" y="5" width="1" height="1" fill="#6b8797"/><rect x="8" y="4" width="2" height="1" fill="#6b8797"/><rect x="8" y="5" width="1" height="1" fill="#6b8797"/><rect x="0" y="8" width="2" height="1" fill="#6b8797"/><rect x="0" y="9" width="1" height="1" fill="#6b8797"/><rect x="4" y="8" width="2" height="1" fill="#6b8797"/><rect x="4" y="9" width="1" height="1" fill="#6b8797"/><rect x="8" y="8" width="2" height="1" fill="#6b8797"/><rect x="8" y="9" width="1" height="1" fill="#6b8797"/><rect x="0" y="12" width="2" height="1" fill="#6b8797"/><rect x="0" y="13" width="1" height="1" fill="#6b8797"/><rect x="4" y="12" width="2" height="1" fill="#6b8797"/><rect x="4" y="13" width="1" height="1" fill="#6b8797"/><rect x="8" y="12" width="2" height="1" fill="#6b8797"/><rect x="8" y="13" width="1" height="1" fill="#6b8797"/><rect x="0" y="16" width="2" height="1" fill="#6b8797"/><rect x="0" y="17" width="1" height="1" fill="#6b8797"/><rect x="4" y="16" width="2" height="1" fill="#6b8797"/><rect x="4" y="17" width="1" height="1" fill="#6b8797"/><rect x="8" y="16" width="2" height="1" fill="#6b8797"/><rect x="8" y="17" width="1" height="1" fill="#6b8797"/></svg><div class="a sbh" style="left:1152px;top:722px;width:16px;height:16px"><svg class="a" style="left:-1px;top:-1px" width="16" height="16"><polygon points="4.0,10.0 12.0,10.0 8.0,6.0" fill="#000"/></svg></div><div class="a sbh" style="left:1152px;top:738px;width:16px;height:16px"><svg class="a" style="left:-1px;top:-1px" width="16" height="16"><polygon points="4.0,6.0 12.0,6.0 8.0,10.0" fill="#000"/></svg></div>
<div class="a" style="left:1094px;top:789px;width:20px;height:20px;border:1px solid #6b8594;border-radius:2px"></div><div class="a" style="left:1097px;top:791px;width:14px;height:16px;background:linear-gradient(#fbfbfb,#dedede);border-right:1px solid #000;border-bottom:1px solid #000"><svg class="a" style="left:3px;top:5px" width="8" height="6"><polygon points="0,1 7.6,1 3.800,5.200" fill="#000"/></svg></div><div class="a nw" style="left:1116px;top:789px;width:11px;height:20px;border:1px solid #6b8594;border-radius:2px;text-align:center;line-height:18px">*</div><div class="a nw" style="left:1129px;top:789px;width:46px;height:20px;border:1px solid #6b8594;border-radius:2px;text-align:center;line-height:18px;color:#0a8a0a">roman</div><svg class="a" style="left:1183px;top:796px" width="14" height="14"><path d="M14 2L2 14M14 6L6 14M14 10L10 14" stroke="#fff" stroke-width="1.500"/><path d="M14 3.500L3.500 14M14 7.500L7.500 14M14 11.500L11.500 14" stroke="#7b95a4" stroke-width="1"/></svg>
</div>
</body></html>
